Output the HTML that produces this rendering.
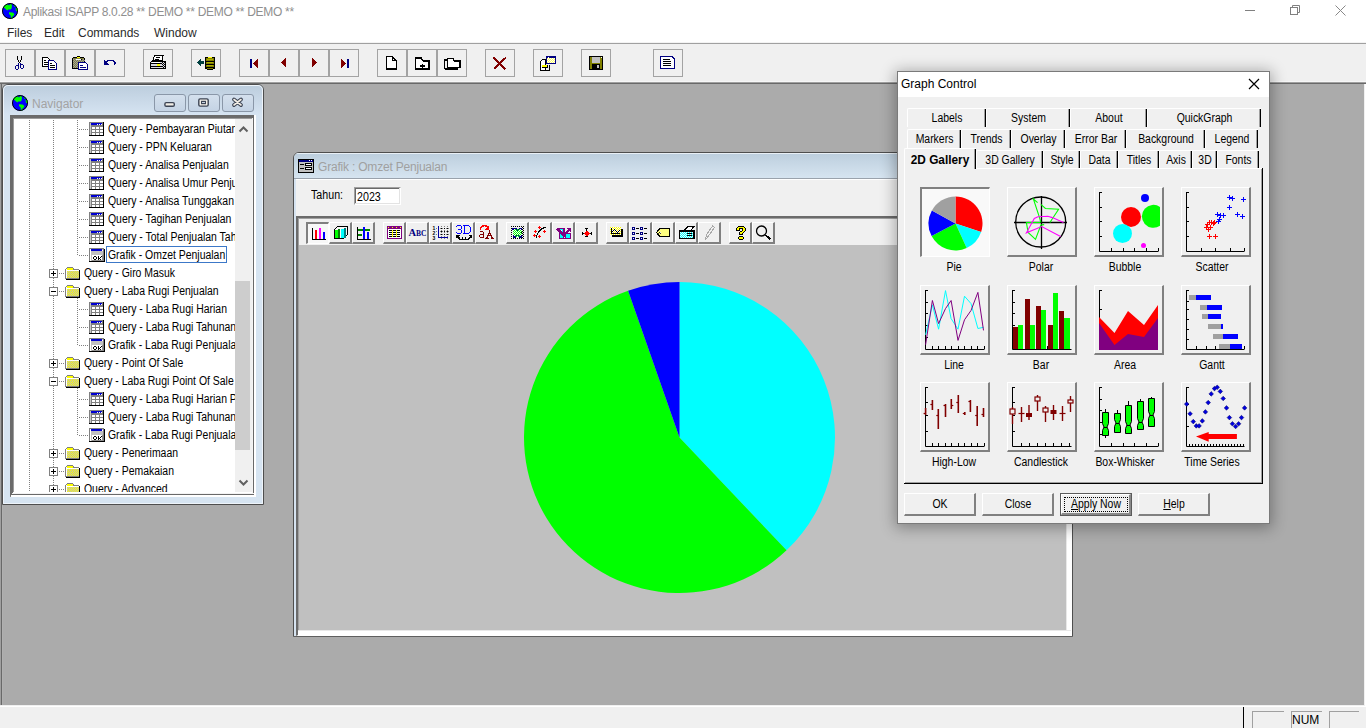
<!DOCTYPE html>
<html><head><meta charset="utf-8">
<style>
*{box-sizing:border-box;margin:0;padding:0}
html,body{width:1366px;height:728px;overflow:hidden;background:#fff;font-family:"Liberation Sans",sans-serif;position:relative}
.a{position:absolute}
.t{position:absolute;white-space:nowrap;font-family:"Liberation Sans",sans-serif;line-height:1}
svg{position:absolute;overflow:visible}
</style></head><body>
<div class="a" style="left:0px;top:0px;width:1366px;height:43px;background:#fff;"></div><div class="a" style="left:0px;top:42px;width:1366px;height:1px;background:#f3f3f3;"></div><div class="a" style="left:0px;top:43px;width:1366px;height:1px;background:#a0a0a0;"></div><div class="a" style="left:0px;top:44px;width:1366px;height:39px;background:#f0f0f0;"></div><div class="a" style="left:0px;top:81px;width:1366px;height:1px;background:#f7f7f7;"></div><div class="a" style="left:0px;top:82px;width:1366px;height:1px;background:#a0a0a0;"></div><div class="a" style="left:0px;top:83px;width:1366px;height:1px;background:#696969;"></div><svg style="left:2px;top:3px" width="16" height="16" viewBox="0 0 16 16">
<circle cx="8" cy="8" r="7.8" fill="#0000ff"/>
<path d="M2.3 2.2L6 1.2L6.5 2.3H7.5L8 1L10 1.4L9.6 5.4L8.6 6.6L6.2 6.6L5.2 7.6L3.5 6L1.5 4Z" fill="#00ff00"/>
<path d="M12.3 1.8L14.2 3L14.3 4.3L12.2 3.5Z M13.5 5L15.8 5.3L15.8 8.2L14 8Z" fill="#00ff00"/>
<path d="M7 9.3L10.6 9.5L12.5 11L11.8 12.5L10.6 13.2L10.2 15.8L9 15.5L8.6 12.5L7 11Z" fill="#00ff00"/>
<path d="M2.2 2.2L6 1.2L6.5 2.3H7.5L8 1L10 1.4L9.6 5.4L8.6 6.6L6.2 6.6L5.2 7.6L3.5 6L1.5 4Z" fill="#00ff00" opacity="0"/><circle cx="8" cy="8" r="7.5" fill="none" stroke="#000" stroke-width="1"/>
</svg><span class="t" style="left:23px;top:6px;font-size:12px;color:#8f8f8f;letter-spacing:-0.3px;">Aplikasi ISAPP 8.0.28 ** DEMO ** DEMO ** DEMO **</span><svg style="left:1240px;top:0px" width="126" height="22">
<line x1="5" y1="10.5" x2="15" y2="10.5" stroke="#808080" stroke-width="1"/>
<rect x="50.5" y="7.5" width="7" height="7" fill="none" stroke="#808080"/>
<path d="M52.5 7.5v-2h7v7h-2" fill="none" stroke="#808080"/>
<path d="M95.5 5.5l10 10M105.5 5.5l-10 10" stroke="#888" stroke-width="1"/>
</svg><span class="t" style="left:7px;top:27px;font-size:12px;color:#2b2b2b;">Files</span><span class="t" style="left:44px;top:27px;font-size:12px;color:#2b2b2b;">Edit</span><span class="t" style="left:78px;top:27px;font-size:12px;color:#2b2b2b;">Commands</span><span class="t" style="left:154px;top:27px;font-size:12px;color:#2b2b2b;">Window</span><div class="a" style="left:5px;top:49px;width:30px;height:28px;border:1px solid #a3a3a3;background:#f0f0f0"></div><div class="a" style="left:35px;top:49px;width:30px;height:28px;border:1px solid #a3a3a3;background:#f0f0f0"></div><div class="a" style="left:65px;top:49px;width:30px;height:28px;border:1px solid #a3a3a3;background:#f0f0f0"></div><div class="a" style="left:95px;top:49px;width:30px;height:28px;border:1px solid #a3a3a3;background:#f0f0f0"></div><div class="a" style="left:143px;top:49px;width:30px;height:28px;border:1px solid #a3a3a3;background:#f0f0f0"></div><div class="a" style="left:191px;top:49px;width:30px;height:28px;border:1px solid #a3a3a3;background:#f0f0f0"></div><div class="a" style="left:239px;top:49px;width:30px;height:28px;border:1px solid #a3a3a3;background:#f0f0f0"></div><div class="a" style="left:269px;top:49px;width:30px;height:28px;border:1px solid #a3a3a3;background:#f0f0f0"></div><div class="a" style="left:299px;top:49px;width:30px;height:28px;border:1px solid #a3a3a3;background:#f0f0f0"></div><div class="a" style="left:329px;top:49px;width:30px;height:28px;border:1px solid #a3a3a3;background:#f0f0f0"></div><div class="a" style="left:377px;top:49px;width:30px;height:28px;border:1px solid #a3a3a3;background:#f0f0f0"></div><div class="a" style="left:407px;top:49px;width:30px;height:28px;border:1px solid #a3a3a3;background:#f0f0f0"></div><div class="a" style="left:437px;top:49px;width:30px;height:28px;border:1px solid #a3a3a3;background:#f0f0f0"></div><div class="a" style="left:485px;top:49px;width:30px;height:28px;border:1px solid #a3a3a3;background:#f0f0f0"></div><div class="a" style="left:533px;top:49px;width:30px;height:28px;border:1px solid #a3a3a3;background:#f0f0f0"></div><div class="a" style="left:581px;top:49px;width:30px;height:28px;border:1px solid #a3a3a3;background:#f0f0f0"></div><div class="a" style="left:653px;top:49px;width:30px;height:28px;border:1px solid #a3a3a3;background:#f0f0f0"></div><svg style="left:0;top:0" width="1366" height="100" shape-rendering="crispEdges"><rect x="17" y="56" width="1" height="1" fill="#000"/><rect x="17" y="57" width="1" height="1" fill="#000"/><rect x="17" y="58" width="1" height="1" fill="#000"/><rect x="17" y="59" width="1" height="1" fill="#000"/><rect x="21" y="56" width="1" height="1" fill="#000"/><rect x="21" y="57" width="1" height="1" fill="#000"/><rect x="21" y="58" width="1" height="1" fill="#000"/><rect x="21" y="59" width="1" height="1" fill="#000"/><rect x="18" y="60" width="1" height="1" fill="#000"/><rect x="20" y="60" width="1" height="1" fill="#000"/><rect x="18" y="61" width="1" height="1" fill="#000"/><rect x="20" y="61" width="1" height="1" fill="#000"/><rect x="19" y="62" width="1" height="1" fill="#000"/><rect x="18" y="63" width="1" height="2" fill="#000080"/><rect x="20" y="63" width="1" height="1" fill="#000080"/><rect x="16" y="65" width="2" height="1" fill="#000080"/><rect x="15" y="66" width="1" height="3" fill="#000080"/><rect x="18" y="65" width="1" height="4" fill="#000080"/><rect x="16" y="69" width="2" height="1" fill="#000080"/><rect x="21" y="64" width="2" height="1" fill="#000080"/><rect x="20" y="64" width="1" height="4" fill="#000080"/><rect x="23" y="65" width="1" height="3" fill="#000080"/><rect x="21" y="68" width="2" height="1" fill="#000080"/><path d="M42.5 66.5v-9h5l2 2v7z" fill="#fff" stroke="#000"/><rect x="44" y="60" width="2" height="1" fill="#000"/><rect x="44" y="62" width="4" height="1" fill="#000"/><rect x="44" y="64" width="4" height="1" fill="#000"/><path d="M48.5 69.5v-9h5l3 3v6z" fill="#fff" stroke="#000080" stroke-width="1.2"/><rect x="50" y="63" width="2" height="1" fill="#000"/><rect x="50" y="65" width="5" height="1" fill="#000"/><rect x="50" y="67" width="5" height="1" fill="#000"/><path d="M72.5 68.5v-10l1-1h3l1-1h2l1 1h3l1 1v10z" fill="#808040" stroke="#000"/><rect x="73" y="59" width="1" height="1" fill="#a0a0a0"/><rect x="75" y="59" width="1" height="1" fill="#a0a0a0"/><rect x="77" y="59" width="1" height="1" fill="#a0a0a0"/><rect x="79" y="59" width="1" height="1" fill="#a0a0a0"/><rect x="81" y="59" width="1" height="1" fill="#a0a0a0"/><rect x="83" y="59" width="1" height="1" fill="#a0a0a0"/><rect x="74" y="60" width="1" height="1" fill="#a0a0a0"/><rect x="76" y="60" width="1" height="1" fill="#a0a0a0"/><rect x="78" y="60" width="1" height="1" fill="#a0a0a0"/><rect x="80" y="60" width="1" height="1" fill="#a0a0a0"/><rect x="82" y="60" width="1" height="1" fill="#a0a0a0"/><rect x="84" y="60" width="1" height="1" fill="#a0a0a0"/><rect x="73" y="61" width="1" height="1" fill="#a0a0a0"/><rect x="75" y="61" width="1" height="1" fill="#a0a0a0"/><rect x="77" y="61" width="1" height="1" fill="#a0a0a0"/><rect x="79" y="61" width="1" height="1" fill="#a0a0a0"/><rect x="81" y="61" width="1" height="1" fill="#a0a0a0"/><rect x="83" y="61" width="1" height="1" fill="#a0a0a0"/><rect x="74" y="62" width="1" height="1" fill="#a0a0a0"/><rect x="76" y="62" width="1" height="1" fill="#a0a0a0"/><rect x="78" y="62" width="1" height="1" fill="#a0a0a0"/><rect x="80" y="62" width="1" height="1" fill="#a0a0a0"/><rect x="82" y="62" width="1" height="1" fill="#a0a0a0"/><rect x="84" y="62" width="1" height="1" fill="#a0a0a0"/><rect x="73" y="63" width="1" height="1" fill="#a0a0a0"/><rect x="75" y="63" width="1" height="1" fill="#a0a0a0"/><rect x="77" y="63" width="1" height="1" fill="#a0a0a0"/><rect x="79" y="63" width="1" height="1" fill="#a0a0a0"/><rect x="81" y="63" width="1" height="1" fill="#a0a0a0"/><rect x="83" y="63" width="1" height="1" fill="#a0a0a0"/><rect x="74" y="64" width="1" height="1" fill="#a0a0a0"/><rect x="76" y="64" width="1" height="1" fill="#a0a0a0"/><rect x="78" y="64" width="1" height="1" fill="#a0a0a0"/><rect x="80" y="64" width="1" height="1" fill="#a0a0a0"/><rect x="82" y="64" width="1" height="1" fill="#a0a0a0"/><rect x="84" y="64" width="1" height="1" fill="#a0a0a0"/><rect x="73" y="65" width="1" height="1" fill="#a0a0a0"/><rect x="75" y="65" width="1" height="1" fill="#a0a0a0"/><rect x="77" y="65" width="1" height="1" fill="#a0a0a0"/><rect x="79" y="65" width="1" height="1" fill="#a0a0a0"/><rect x="81" y="65" width="1" height="1" fill="#a0a0a0"/><rect x="83" y="65" width="1" height="1" fill="#a0a0a0"/><rect x="74" y="66" width="1" height="1" fill="#a0a0a0"/><rect x="76" y="66" width="1" height="1" fill="#a0a0a0"/><rect x="78" y="66" width="1" height="1" fill="#a0a0a0"/><rect x="80" y="66" width="1" height="1" fill="#a0a0a0"/><rect x="82" y="66" width="1" height="1" fill="#a0a0a0"/><rect x="84" y="66" width="1" height="1" fill="#a0a0a0"/><rect x="73" y="67" width="1" height="1" fill="#a0a0a0"/><rect x="75" y="67" width="1" height="1" fill="#a0a0a0"/><rect x="77" y="67" width="1" height="1" fill="#a0a0a0"/><rect x="79" y="67" width="1" height="1" fill="#a0a0a0"/><rect x="81" y="67" width="1" height="1" fill="#a0a0a0"/><rect x="83" y="67" width="1" height="1" fill="#a0a0a0"/><path d="M75.5 59.5h6" stroke="#000"/><path d="M76.5 58.5l1-1.5h2l1 1.5" fill="none" stroke="#ffff00"/><path d="M76 59h5" stroke="#fff"/><path d="M78.5 69.5v-7h7l2 2v5z" fill="#fff" stroke="#000080" stroke-width="1.2"/><rect x="80" y="65" width="3" height="1" fill="#000080"/><rect x="80" y="67" width="6" height="1" fill="#000080"/><path d="M104 60v5h5z" fill="#000080"/><path d="M106.5 62l2-1.5h4.5l2 1.5v2l-1.5 1.5" fill="none" stroke="#000080" stroke-width="1.4"/><path d="M155 55.5h8.5l-1 1.5v3h-9.5l1.5-4z" fill="#fff" stroke="#000"/><rect x="156" y="57" width="4" height="1" fill="#000"/><rect x="155" y="59" width="4" height="1" fill="#000"/><path d="M150.5 68.5v-6l1-1h13l1 1v6z" fill="#d8d8e0" stroke="#000"/><rect x="151" y="63" width="11" height="1" fill="#000"/><rect x="151" y="66" width="11" height="1" fill="#000"/><rect x="157" y="64" width="3" height="2" fill="#ffff00"/><rect x="152" y="62" width="8" height="1" fill="#fff"/><rect x="163" y="61" width="1" height="1" fill="#000"/><rect x="165" y="61" width="1" height="1" fill="#000"/><rect x="162" y="62" width="1" height="1" fill="#000"/><rect x="164" y="62" width="1" height="1" fill="#000"/><rect x="163" y="63" width="1" height="1" fill="#000"/><rect x="165" y="63" width="1" height="1" fill="#000"/><rect x="162" y="64" width="1" height="1" fill="#000"/><rect x="164" y="64" width="1" height="1" fill="#000"/><rect x="163" y="65" width="1" height="1" fill="#000"/><rect x="165" y="65" width="1" height="1" fill="#000"/><rect x="162" y="66" width="1" height="1" fill="#000"/><rect x="164" y="66" width="1" height="1" fill="#000"/><rect x="163" y="67" width="1" height="1" fill="#000"/><rect x="165" y="67" width="1" height="1" fill="#000"/><rect x="162" y="68" width="1" height="1" fill="#000"/><rect x="164" y="68" width="1" height="1" fill="#000"/><path d="M197 62.5l3.5-3.5v2h3.5v3h-3.5v2z" fill="#004040"/><path d="M205.5 68.5v-10.5l1.5-1h6l1.5 1v10.5l-1.5 0.5h-6z" fill="#808000" stroke="#000"/><rect x="208" y="57" width="4" height="1" fill="#ffff00"/><rect x="206" y="61" width="8" height="1" fill="#000"/><rect x="206" y="64" width="8" height="1" fill="#000"/><rect x="206" y="67" width="8" height="1" fill="#000"/><rect x="207" y="59" width="6" height="1" fill="#b0b000"/><rect x="207" y="62" width="6" height="1" fill="#b0b000"/><rect x="207" y="65" width="6" height="1" fill="#b0b000"/><rect x="250" y="59" width="2" height="9" fill="#000080"/><path d="M253 63.5l5-5v10z" fill="#800000"/><path d="M281 62.5l5-4.5v9z" fill="#800000"/><path d="M312 58v9l5.2-4.5z" fill="#800000"/><rect x="347" y="59" width="2" height="9" fill="#000080"/><path d="M341 58.5v10l5-5z" fill="#800000"/><path d="M386.7 69.2v-12.5h5.5l4.2 4.2v8.3z" fill="#fff" stroke="#000" stroke-width="1.5"/><path d="M392.2 56.7v4.2h4.2" fill="none" stroke="#000" stroke-width="1"/><path d="M415.7 69.2v-11h5.5l2.5 3h5.5v8z" fill="#fff" stroke="#000" stroke-width="1.5"/><path d="M420 66h5M422.5 63.5v5" stroke="#000" stroke-width="1.3"/><path d="M444.7 69.2v-9h2.5" fill="none" stroke="#000" stroke-width="1.5"/><path d="M444.7 69.2h13" stroke="#000" stroke-width="1.5"/><path d="M447.7 67.5v-9h5l2 2.5h5.5v6.5z" fill="#fff" stroke="#000" stroke-width="1.5"/><path d="M493.5 57.5l12 12M506 57.5l-11.5 11" stroke="#800000" stroke-width="2"/><path d="M540.5 70.5v-9l2-2h3v11z" fill="#fff" stroke="#000"/><path d="M540.5 70.5h9v-6" fill="none" stroke="#000"/><rect x="542" y="65" width="5" height="2" fill="#ffff00"/><path d="M541.5 67.5h6v-3" fill="none" stroke="#000"/><rect x="546" y="56" width="10" height="8" fill="#000080"/><rect x="547" y="58" width="8" height="5" fill="#ffff60"/><rect x="548" y="57" width="1" height="1" fill="#fff"/><rect x="548" y="58" width="1" height="1" fill="#fff"/><rect x="550" y="58" width="1" height="1" fill="#fff"/><rect x="552" y="58" width="1" height="1" fill="#fff"/><rect x="554" y="58" width="1" height="1" fill="#fff"/><rect x="547" y="59" width="1" height="1" fill="#fff"/><rect x="549" y="59" width="1" height="1" fill="#fff"/><rect x="551" y="59" width="1" height="1" fill="#fff"/><rect x="553" y="59" width="1" height="1" fill="#fff"/><rect x="548" y="60" width="1" height="1" fill="#fff"/><rect x="550" y="60" width="1" height="1" fill="#fff"/><rect x="552" y="60" width="1" height="1" fill="#fff"/><rect x="554" y="60" width="1" height="1" fill="#fff"/><rect x="547" y="61" width="1" height="1" fill="#fff"/><rect x="549" y="61" width="1" height="1" fill="#fff"/><rect x="551" y="61" width="1" height="1" fill="#fff"/><rect x="553" y="61" width="1" height="1" fill="#fff"/><rect x="548" y="62" width="1" height="1" fill="#fff"/><rect x="550" y="62" width="1" height="1" fill="#fff"/><rect x="552" y="62" width="1" height="1" fill="#fff"/><rect x="554" y="62" width="1" height="1" fill="#fff"/><rect x="589" y="56" width="14" height="14" fill="#000"/><rect x="590" y="57" width="12" height="12" fill="#808000"/><rect x="592" y="57" width="8" height="6" fill="#c0c0c0"/><rect x="592" y="64" width="8" height="5" fill="#000"/><rect x="597" y="65" width="2" height="3" fill="#c0c0c0"/><rect x="601" y="57" width="1" height="1" fill="#fff"/><path d="M660.6 68.4v-12h11.5l2.2 2.2v9.8z" fill="#fff" stroke="#000080" stroke-width="1.4"/><rect x="663" y="59" width="7" height="1" fill="#000"/><rect x="663" y="61" width="8" height="1" fill="#000"/><rect x="663" y="63" width="8" height="1" fill="#000"/><rect x="663" y="65" width="8" height="1" fill="#000"/></svg><div class="a" style="left:0px;top:84px;width:1366px;height:621px;background:#ababab;"></div><div class="a" style="left:0px;top:84px;width:1px;height:621px;background:#a0a0a0;"></div><div class="a" style="left:1px;top:84px;width:1px;height:621px;background:#696969;"></div><div class="a" style="left:2px;top:84px;width:1px;height:621px;background:#b0b0b0;"></div><div class="a" style="left:1364px;top:84px;width:1px;height:622px;background:#f0f0f0;"></div><div class="a" style="left:1365px;top:84px;width:1px;height:622px;background:#fff;"></div><div class="a" style="left:0px;top:705px;width:1365px;height:1px;background:#f0f0f0;"></div><div class="a" style="left:0px;top:706px;width:1366px;height:1px;background:#fff;"></div><div class="a" style="left:0px;top:707px;width:1366px;height:21px;background:#f0f0f0;"></div><div class="a" style="left:1243px;top:707px;width:1px;height:21px;background:#000;"></div><div class="a" style="left:1252px;top:711px;width:32px;height:17px;border-top:1px solid #a0a0a0;border-left:1px solid #a0a0a0"></div><div class="a" style="left:1291px;top:711px;width:31px;height:17px;border-top:1px solid #a0a0a0;border-left:1px solid #a0a0a0"></div><div class="a" style="left:1329px;top:711px;width:30px;height:17px;border-top:1px solid #a0a0a0;border-left:1px solid #a0a0a0"></div><span class="t" style="left:1292px;top:714px;font-size:12px;color:#000;">NUM</span><div class="a" style="left:2px;top:84px;width:262px;height:421px;background:#d6e4f1;border:1px solid #4e4e4e;border-radius:6px 6px 0 0;overflow:hidden"><div class="a" style="left:0;top:0;width:260px;height:30px;background:linear-gradient(#bccddd,#d6e4f2)"></div><div class="a" style="left:0;top:0;width:260px;height:419px;border:1px solid #eef4fa;border-radius:5px 5px 0 0"></div></div><svg style="left:12px;top:95px" width="16" height="16" viewBox="0 0 16 16">
<circle cx="8" cy="8" r="7.8" fill="#0000ff"/>
<path d="M2.3 2.2L6 1.2L6.5 2.3H7.5L8 1L10 1.4L9.6 5.4L8.6 6.6L6.2 6.6L5.2 7.6L3.5 6L1.5 4Z" fill="#00ff00"/>
<path d="M12.3 1.8L14.2 3L14.3 4.3L12.2 3.5Z M13.5 5L15.8 5.3L15.8 8.2L14 8Z" fill="#00ff00"/>
<path d="M7 9.3L10.6 9.5L12.5 11L11.8 12.5L10.6 13.2L10.2 15.8L9 15.5L8.6 12.5L7 11Z" fill="#00ff00"/>
<path d="M2.2 2.2L6 1.2L6.5 2.3H7.5L8 1L10 1.4L9.6 5.4L8.6 6.6L6.2 6.6L5.2 7.6L3.5 6L1.5 4Z" fill="#00ff00" opacity="0"/><circle cx="8" cy="8" r="7.5" fill="none" stroke="#000" stroke-width="1"/>
</svg><span class="t" style="left:32px;top:98px;font-size:12px;color:#a3a3a3;">Navigator</span><div class="a" style="left:154px;top:94px;width:32px;height:18px;border:1px solid #8a97a8;border-radius:3px;background:linear-gradient(#d4e0ed,#c4d3e4)"></div><div class="a" style="left:188px;top:94px;width:32px;height:18px;border:1px solid #8a97a8;border-radius:3px;background:linear-gradient(#d4e0ed,#c4d3e4)"></div><div class="a" style="left:222px;top:94px;width:32px;height:18px;border:1px solid #8a97a8;border-radius:3px;background:linear-gradient(#d4e0ed,#c4d3e4)"></div><svg style="left:154px;top:94px" width="100" height="18">
<rect x="10.9" y="8.6" width="9.4" height="3.6" rx="1.3" fill="#f2eee6" stroke="#3c4454" stroke-width="1.4"/>
<rect x="44.8" y="4.9" width="9.4" height="7.2" rx="1.3" fill="#f2eee6" stroke="#3c4454" stroke-width="1.4"/>
<rect x="47.6" y="7.4" width="3.8" height="2.2" fill="#c8d4e2" stroke="#3c4454" stroke-width="1.2"/>
<path d="M80 5.5l7 5.5M87 5.5l-7 5.5" stroke="#3c4454" stroke-width="3.8" stroke-linecap="round"/><path d="M80 5.5l7 5.5M87 5.5l-7 5.5" stroke="#f2eee6" stroke-width="1.6" stroke-linecap="round"/>
</svg><div class="a" style="left:10px;top:115px;width:246px;height:382px;background:#fff;border-top:3px solid #6b6b6b;border-left:3px solid #6b6b6b;border-right:1px solid #fff;border-bottom:1px solid #fff"></div><div class="a" style="left:13px;top:118px;width:240px;height:1px;background:#9c9c9c;"></div><div class="a" style="left:13px;top:118px;width:1px;height:374px;background:#9c9c9c;"></div><div class="a" style="left:252px;top:118px;width:1px;height:375px;background:#f4f4f4;"></div><div class="a" style="left:253px;top:116px;width:1px;height:379px;background:#696969;"></div><div class="a" style="left:12px;top:493px;width:242px;height:1px;background:#f4f4f4;"></div><div class="a" style="left:12px;top:494px;width:242px;height:1px;background:#696969;"></div><div class="a" style="left:254px;top:115px;width:2px;height:382px;background:#fff;"></div><div class="a" style="left:11px;top:495px;width:245px;height:2px;background:#fff;"></div><div class="a" style="left:14px;top:119px;width:238px;height:373px;background:#fff;"></div><div class="a" style="left:235px;top:119px;width:17px;height:373px;background:#f0f0f0;"></div><div class="a" style="left:235px;top:281px;width:15px;height:169px;background:#cdcdcd;"></div><svg style="left:235px;top:119px" width="17" height="373">
<path d="M4.5 12.5l4-4 4 4" fill="none" stroke="#606060" stroke-width="2"/>
<path d="M4.5 361.5l4 4 4-4" fill="none" stroke="#606060" stroke-width="2"/>
</svg><div class="a" style="left:14px;top:119px;width:221px;height:373px;overflow:hidden"><svg style="left:-14px;top:-119px" width="300" height="520" shape-rendering="crispEdges"><rect x="29" y="120" width="1" height="1" fill="#808080"/><rect x="29" y="122" width="1" height="1" fill="#808080"/><rect x="29" y="124" width="1" height="1" fill="#808080"/><rect x="29" y="126" width="1" height="1" fill="#808080"/><rect x="29" y="128" width="1" height="1" fill="#808080"/><rect x="29" y="130" width="1" height="1" fill="#808080"/><rect x="29" y="132" width="1" height="1" fill="#808080"/><rect x="29" y="134" width="1" height="1" fill="#808080"/><rect x="29" y="136" width="1" height="1" fill="#808080"/><rect x="29" y="138" width="1" height="1" fill="#808080"/><rect x="29" y="140" width="1" height="1" fill="#808080"/><rect x="29" y="142" width="1" height="1" fill="#808080"/><rect x="29" y="144" width="1" height="1" fill="#808080"/><rect x="29" y="146" width="1" height="1" fill="#808080"/><rect x="29" y="148" width="1" height="1" fill="#808080"/><rect x="29" y="150" width="1" height="1" fill="#808080"/><rect x="29" y="152" width="1" height="1" fill="#808080"/><rect x="29" y="154" width="1" height="1" fill="#808080"/><rect x="29" y="156" width="1" height="1" fill="#808080"/><rect x="29" y="158" width="1" height="1" fill="#808080"/><rect x="29" y="160" width="1" height="1" fill="#808080"/><rect x="29" y="162" width="1" height="1" fill="#808080"/><rect x="29" y="164" width="1" height="1" fill="#808080"/><rect x="29" y="166" width="1" height="1" fill="#808080"/><rect x="29" y="168" width="1" height="1" fill="#808080"/><rect x="29" y="170" width="1" height="1" fill="#808080"/><rect x="29" y="172" width="1" height="1" fill="#808080"/><rect x="29" y="174" width="1" height="1" fill="#808080"/><rect x="29" y="176" width="1" height="1" fill="#808080"/><rect x="29" y="178" width="1" height="1" fill="#808080"/><rect x="29" y="180" width="1" height="1" fill="#808080"/><rect x="29" y="182" width="1" height="1" fill="#808080"/><rect x="29" y="184" width="1" height="1" fill="#808080"/><rect x="29" y="186" width="1" height="1" fill="#808080"/><rect x="29" y="188" width="1" height="1" fill="#808080"/><rect x="29" y="190" width="1" height="1" fill="#808080"/><rect x="29" y="192" width="1" height="1" fill="#808080"/><rect x="29" y="194" width="1" height="1" fill="#808080"/><rect x="29" y="196" width="1" height="1" fill="#808080"/><rect x="29" y="198" width="1" height="1" fill="#808080"/><rect x="29" y="200" width="1" height="1" fill="#808080"/><rect x="29" y="202" width="1" height="1" fill="#808080"/><rect x="29" y="204" width="1" height="1" fill="#808080"/><rect x="29" y="206" width="1" height="1" fill="#808080"/><rect x="29" y="208" width="1" height="1" fill="#808080"/><rect x="29" y="210" width="1" height="1" fill="#808080"/><rect x="29" y="212" width="1" height="1" fill="#808080"/><rect x="29" y="214" width="1" height="1" fill="#808080"/><rect x="29" y="216" width="1" height="1" fill="#808080"/><rect x="29" y="218" width="1" height="1" fill="#808080"/><rect x="29" y="220" width="1" height="1" fill="#808080"/><rect x="29" y="222" width="1" height="1" fill="#808080"/><rect x="29" y="224" width="1" height="1" fill="#808080"/><rect x="29" y="226" width="1" height="1" fill="#808080"/><rect x="29" y="228" width="1" height="1" fill="#808080"/><rect x="29" y="230" width="1" height="1" fill="#808080"/><rect x="29" y="232" width="1" height="1" fill="#808080"/><rect x="29" y="234" width="1" height="1" fill="#808080"/><rect x="29" y="236" width="1" height="1" fill="#808080"/><rect x="29" y="238" width="1" height="1" fill="#808080"/><rect x="29" y="240" width="1" height="1" fill="#808080"/><rect x="29" y="242" width="1" height="1" fill="#808080"/><rect x="29" y="244" width="1" height="1" fill="#808080"/><rect x="29" y="246" width="1" height="1" fill="#808080"/><rect x="29" y="248" width="1" height="1" fill="#808080"/><rect x="29" y="250" width="1" height="1" fill="#808080"/><rect x="29" y="252" width="1" height="1" fill="#808080"/><rect x="29" y="254" width="1" height="1" fill="#808080"/><rect x="29" y="256" width="1" height="1" fill="#808080"/><rect x="29" y="258" width="1" height="1" fill="#808080"/><rect x="29" y="260" width="1" height="1" fill="#808080"/><rect x="29" y="262" width="1" height="1" fill="#808080"/><rect x="29" y="264" width="1" height="1" fill="#808080"/><rect x="29" y="266" width="1" height="1" fill="#808080"/><rect x="29" y="268" width="1" height="1" fill="#808080"/><rect x="29" y="270" width="1" height="1" fill="#808080"/><rect x="29" y="272" width="1" height="1" fill="#808080"/><rect x="29" y="274" width="1" height="1" fill="#808080"/><rect x="29" y="276" width="1" height="1" fill="#808080"/><rect x="29" y="278" width="1" height="1" fill="#808080"/><rect x="29" y="280" width="1" height="1" fill="#808080"/><rect x="29" y="282" width="1" height="1" fill="#808080"/><rect x="29" y="284" width="1" height="1" fill="#808080"/><rect x="29" y="286" width="1" height="1" fill="#808080"/><rect x="29" y="288" width="1" height="1" fill="#808080"/><rect x="29" y="290" width="1" height="1" fill="#808080"/><rect x="29" y="292" width="1" height="1" fill="#808080"/><rect x="29" y="294" width="1" height="1" fill="#808080"/><rect x="29" y="296" width="1" height="1" fill="#808080"/><rect x="29" y="298" width="1" height="1" fill="#808080"/><rect x="29" y="300" width="1" height="1" fill="#808080"/><rect x="29" y="302" width="1" height="1" fill="#808080"/><rect x="29" y="304" width="1" height="1" fill="#808080"/><rect x="29" y="306" width="1" height="1" fill="#808080"/><rect x="29" y="308" width="1" height="1" fill="#808080"/><rect x="29" y="310" width="1" height="1" fill="#808080"/><rect x="29" y="312" width="1" height="1" fill="#808080"/><rect x="29" y="314" width="1" height="1" fill="#808080"/><rect x="29" y="316" width="1" height="1" fill="#808080"/><rect x="29" y="318" width="1" height="1" fill="#808080"/><rect x="29" y="320" width="1" height="1" fill="#808080"/><rect x="29" y="322" width="1" height="1" fill="#808080"/><rect x="29" y="324" width="1" height="1" fill="#808080"/><rect x="29" y="326" width="1" height="1" fill="#808080"/><rect x="29" y="328" width="1" height="1" fill="#808080"/><rect x="29" y="330" width="1" height="1" fill="#808080"/><rect x="29" y="332" width="1" height="1" fill="#808080"/><rect x="29" y="334" width="1" height="1" fill="#808080"/><rect x="29" y="336" width="1" height="1" fill="#808080"/><rect x="29" y="338" width="1" height="1" fill="#808080"/><rect x="29" y="340" width="1" height="1" fill="#808080"/><rect x="29" y="342" width="1" height="1" fill="#808080"/><rect x="29" y="344" width="1" height="1" fill="#808080"/><rect x="29" y="346" width="1" height="1" fill="#808080"/><rect x="29" y="348" width="1" height="1" fill="#808080"/><rect x="29" y="350" width="1" height="1" fill="#808080"/><rect x="29" y="352" width="1" height="1" fill="#808080"/><rect x="29" y="354" width="1" height="1" fill="#808080"/><rect x="29" y="356" width="1" height="1" fill="#808080"/><rect x="29" y="358" width="1" height="1" fill="#808080"/><rect x="29" y="360" width="1" height="1" fill="#808080"/><rect x="29" y="362" width="1" height="1" fill="#808080"/><rect x="29" y="364" width="1" height="1" fill="#808080"/><rect x="29" y="366" width="1" height="1" fill="#808080"/><rect x="29" y="368" width="1" height="1" fill="#808080"/><rect x="29" y="370" width="1" height="1" fill="#808080"/><rect x="29" y="372" width="1" height="1" fill="#808080"/><rect x="29" y="374" width="1" height="1" fill="#808080"/><rect x="29" y="376" width="1" height="1" fill="#808080"/><rect x="29" y="378" width="1" height="1" fill="#808080"/><rect x="29" y="380" width="1" height="1" fill="#808080"/><rect x="29" y="382" width="1" height="1" fill="#808080"/><rect x="29" y="384" width="1" height="1" fill="#808080"/><rect x="29" y="386" width="1" height="1" fill="#808080"/><rect x="29" y="388" width="1" height="1" fill="#808080"/><rect x="29" y="390" width="1" height="1" fill="#808080"/><rect x="29" y="392" width="1" height="1" fill="#808080"/><rect x="29" y="394" width="1" height="1" fill="#808080"/><rect x="29" y="396" width="1" height="1" fill="#808080"/><rect x="29" y="398" width="1" height="1" fill="#808080"/><rect x="29" y="400" width="1" height="1" fill="#808080"/><rect x="29" y="402" width="1" height="1" fill="#808080"/><rect x="29" y="404" width="1" height="1" fill="#808080"/><rect x="29" y="406" width="1" height="1" fill="#808080"/><rect x="29" y="408" width="1" height="1" fill="#808080"/><rect x="29" y="410" width="1" height="1" fill="#808080"/><rect x="29" y="412" width="1" height="1" fill="#808080"/><rect x="29" y="414" width="1" height="1" fill="#808080"/><rect x="29" y="416" width="1" height="1" fill="#808080"/><rect x="29" y="418" width="1" height="1" fill="#808080"/><rect x="29" y="420" width="1" height="1" fill="#808080"/><rect x="29" y="422" width="1" height="1" fill="#808080"/><rect x="29" y="424" width="1" height="1" fill="#808080"/><rect x="29" y="426" width="1" height="1" fill="#808080"/><rect x="29" y="428" width="1" height="1" fill="#808080"/><rect x="29" y="430" width="1" height="1" fill="#808080"/><rect x="29" y="432" width="1" height="1" fill="#808080"/><rect x="29" y="434" width="1" height="1" fill="#808080"/><rect x="29" y="436" width="1" height="1" fill="#808080"/><rect x="29" y="438" width="1" height="1" fill="#808080"/><rect x="29" y="440" width="1" height="1" fill="#808080"/><rect x="29" y="442" width="1" height="1" fill="#808080"/><rect x="29" y="444" width="1" height="1" fill="#808080"/><rect x="29" y="446" width="1" height="1" fill="#808080"/><rect x="29" y="448" width="1" height="1" fill="#808080"/><rect x="29" y="450" width="1" height="1" fill="#808080"/><rect x="29" y="452" width="1" height="1" fill="#808080"/><rect x="29" y="454" width="1" height="1" fill="#808080"/><rect x="29" y="456" width="1" height="1" fill="#808080"/><rect x="29" y="458" width="1" height="1" fill="#808080"/><rect x="29" y="460" width="1" height="1" fill="#808080"/><rect x="29" y="462" width="1" height="1" fill="#808080"/><rect x="29" y="464" width="1" height="1" fill="#808080"/><rect x="29" y="466" width="1" height="1" fill="#808080"/><rect x="29" y="468" width="1" height="1" fill="#808080"/><rect x="29" y="470" width="1" height="1" fill="#808080"/><rect x="29" y="472" width="1" height="1" fill="#808080"/><rect x="29" y="474" width="1" height="1" fill="#808080"/><rect x="29" y="476" width="1" height="1" fill="#808080"/><rect x="29" y="478" width="1" height="1" fill="#808080"/><rect x="29" y="480" width="1" height="1" fill="#808080"/><rect x="29" y="482" width="1" height="1" fill="#808080"/><rect x="29" y="484" width="1" height="1" fill="#808080"/><rect x="29" y="486" width="1" height="1" fill="#808080"/><rect x="29" y="488" width="1" height="1" fill="#808080"/><rect x="29" y="490" width="1" height="1" fill="#808080"/><rect x="53" y="120" width="1" height="1" fill="#808080"/><rect x="53" y="122" width="1" height="1" fill="#808080"/><rect x="53" y="124" width="1" height="1" fill="#808080"/><rect x="53" y="126" width="1" height="1" fill="#808080"/><rect x="53" y="128" width="1" height="1" fill="#808080"/><rect x="53" y="130" width="1" height="1" fill="#808080"/><rect x="53" y="132" width="1" height="1" fill="#808080"/><rect x="53" y="134" width="1" height="1" fill="#808080"/><rect x="53" y="136" width="1" height="1" fill="#808080"/><rect x="53" y="138" width="1" height="1" fill="#808080"/><rect x="53" y="140" width="1" height="1" fill="#808080"/><rect x="53" y="142" width="1" height="1" fill="#808080"/><rect x="53" y="144" width="1" height="1" fill="#808080"/><rect x="53" y="146" width="1" height="1" fill="#808080"/><rect x="53" y="148" width="1" height="1" fill="#808080"/><rect x="53" y="150" width="1" height="1" fill="#808080"/><rect x="53" y="152" width="1" height="1" fill="#808080"/><rect x="53" y="154" width="1" height="1" fill="#808080"/><rect x="53" y="156" width="1" height="1" fill="#808080"/><rect x="53" y="158" width="1" height="1" fill="#808080"/><rect x="53" y="160" width="1" height="1" fill="#808080"/><rect x="53" y="162" width="1" height="1" fill="#808080"/><rect x="53" y="164" width="1" height="1" fill="#808080"/><rect x="53" y="166" width="1" height="1" fill="#808080"/><rect x="53" y="168" width="1" height="1" fill="#808080"/><rect x="53" y="170" width="1" height="1" fill="#808080"/><rect x="53" y="172" width="1" height="1" fill="#808080"/><rect x="53" y="174" width="1" height="1" fill="#808080"/><rect x="53" y="176" width="1" height="1" fill="#808080"/><rect x="53" y="178" width="1" height="1" fill="#808080"/><rect x="53" y="180" width="1" height="1" fill="#808080"/><rect x="53" y="182" width="1" height="1" fill="#808080"/><rect x="53" y="184" width="1" height="1" fill="#808080"/><rect x="53" y="186" width="1" height="1" fill="#808080"/><rect x="53" y="188" width="1" height="1" fill="#808080"/><rect x="53" y="190" width="1" height="1" fill="#808080"/><rect x="53" y="192" width="1" height="1" fill="#808080"/><rect x="53" y="194" width="1" height="1" fill="#808080"/><rect x="53" y="196" width="1" height="1" fill="#808080"/><rect x="53" y="198" width="1" height="1" fill="#808080"/><rect x="53" y="200" width="1" height="1" fill="#808080"/><rect x="53" y="202" width="1" height="1" fill="#808080"/><rect x="53" y="204" width="1" height="1" fill="#808080"/><rect x="53" y="206" width="1" height="1" fill="#808080"/><rect x="53" y="208" width="1" height="1" fill="#808080"/><rect x="53" y="210" width="1" height="1" fill="#808080"/><rect x="53" y="212" width="1" height="1" fill="#808080"/><rect x="53" y="214" width="1" height="1" fill="#808080"/><rect x="53" y="216" width="1" height="1" fill="#808080"/><rect x="53" y="218" width="1" height="1" fill="#808080"/><rect x="53" y="220" width="1" height="1" fill="#808080"/><rect x="53" y="222" width="1" height="1" fill="#808080"/><rect x="53" y="224" width="1" height="1" fill="#808080"/><rect x="53" y="226" width="1" height="1" fill="#808080"/><rect x="53" y="228" width="1" height="1" fill="#808080"/><rect x="53" y="230" width="1" height="1" fill="#808080"/><rect x="53" y="232" width="1" height="1" fill="#808080"/><rect x="53" y="234" width="1" height="1" fill="#808080"/><rect x="53" y="236" width="1" height="1" fill="#808080"/><rect x="53" y="238" width="1" height="1" fill="#808080"/><rect x="53" y="240" width="1" height="1" fill="#808080"/><rect x="53" y="242" width="1" height="1" fill="#808080"/><rect x="53" y="244" width="1" height="1" fill="#808080"/><rect x="53" y="246" width="1" height="1" fill="#808080"/><rect x="53" y="248" width="1" height="1" fill="#808080"/><rect x="53" y="250" width="1" height="1" fill="#808080"/><rect x="53" y="252" width="1" height="1" fill="#808080"/><rect x="53" y="254" width="1" height="1" fill="#808080"/><rect x="53" y="256" width="1" height="1" fill="#808080"/><rect x="53" y="258" width="1" height="1" fill="#808080"/><rect x="53" y="260" width="1" height="1" fill="#808080"/><rect x="53" y="262" width="1" height="1" fill="#808080"/><rect x="53" y="264" width="1" height="1" fill="#808080"/><rect x="53" y="266" width="1" height="1" fill="#808080"/><rect x="53" y="268" width="1" height="1" fill="#808080"/><rect x="53" y="270" width="1" height="1" fill="#808080"/><rect x="53" y="272" width="1" height="1" fill="#808080"/><rect x="53" y="274" width="1" height="1" fill="#808080"/><rect x="53" y="276" width="1" height="1" fill="#808080"/><rect x="53" y="278" width="1" height="1" fill="#808080"/><rect x="53" y="280" width="1" height="1" fill="#808080"/><rect x="53" y="282" width="1" height="1" fill="#808080"/><rect x="53" y="284" width="1" height="1" fill="#808080"/><rect x="53" y="286" width="1" height="1" fill="#808080"/><rect x="53" y="288" width="1" height="1" fill="#808080"/><rect x="53" y="290" width="1" height="1" fill="#808080"/><rect x="53" y="292" width="1" height="1" fill="#808080"/><rect x="53" y="294" width="1" height="1" fill="#808080"/><rect x="53" y="296" width="1" height="1" fill="#808080"/><rect x="53" y="298" width="1" height="1" fill="#808080"/><rect x="53" y="300" width="1" height="1" fill="#808080"/><rect x="53" y="302" width="1" height="1" fill="#808080"/><rect x="53" y="304" width="1" height="1" fill="#808080"/><rect x="53" y="306" width="1" height="1" fill="#808080"/><rect x="53" y="308" width="1" height="1" fill="#808080"/><rect x="53" y="310" width="1" height="1" fill="#808080"/><rect x="53" y="312" width="1" height="1" fill="#808080"/><rect x="53" y="314" width="1" height="1" fill="#808080"/><rect x="53" y="316" width="1" height="1" fill="#808080"/><rect x="53" y="318" width="1" height="1" fill="#808080"/><rect x="53" y="320" width="1" height="1" fill="#808080"/><rect x="53" y="322" width="1" height="1" fill="#808080"/><rect x="53" y="324" width="1" height="1" fill="#808080"/><rect x="53" y="326" width="1" height="1" fill="#808080"/><rect x="53" y="328" width="1" height="1" fill="#808080"/><rect x="53" y="330" width="1" height="1" fill="#808080"/><rect x="53" y="332" width="1" height="1" fill="#808080"/><rect x="53" y="334" width="1" height="1" fill="#808080"/><rect x="53" y="336" width="1" height="1" fill="#808080"/><rect x="53" y="338" width="1" height="1" fill="#808080"/><rect x="53" y="340" width="1" height="1" fill="#808080"/><rect x="53" y="342" width="1" height="1" fill="#808080"/><rect x="53" y="344" width="1" height="1" fill="#808080"/><rect x="53" y="346" width="1" height="1" fill="#808080"/><rect x="53" y="348" width="1" height="1" fill="#808080"/><rect x="53" y="350" width="1" height="1" fill="#808080"/><rect x="53" y="352" width="1" height="1" fill="#808080"/><rect x="53" y="354" width="1" height="1" fill="#808080"/><rect x="53" y="356" width="1" height="1" fill="#808080"/><rect x="53" y="358" width="1" height="1" fill="#808080"/><rect x="53" y="360" width="1" height="1" fill="#808080"/><rect x="53" y="362" width="1" height="1" fill="#808080"/><rect x="53" y="364" width="1" height="1" fill="#808080"/><rect x="53" y="366" width="1" height="1" fill="#808080"/><rect x="53" y="368" width="1" height="1" fill="#808080"/><rect x="53" y="370" width="1" height="1" fill="#808080"/><rect x="53" y="372" width="1" height="1" fill="#808080"/><rect x="53" y="374" width="1" height="1" fill="#808080"/><rect x="53" y="376" width="1" height="1" fill="#808080"/><rect x="53" y="378" width="1" height="1" fill="#808080"/><rect x="53" y="380" width="1" height="1" fill="#808080"/><rect x="53" y="382" width="1" height="1" fill="#808080"/><rect x="53" y="384" width="1" height="1" fill="#808080"/><rect x="53" y="386" width="1" height="1" fill="#808080"/><rect x="53" y="388" width="1" height="1" fill="#808080"/><rect x="53" y="390" width="1" height="1" fill="#808080"/><rect x="53" y="392" width="1" height="1" fill="#808080"/><rect x="53" y="394" width="1" height="1" fill="#808080"/><rect x="53" y="396" width="1" height="1" fill="#808080"/><rect x="53" y="398" width="1" height="1" fill="#808080"/><rect x="53" y="400" width="1" height="1" fill="#808080"/><rect x="53" y="402" width="1" height="1" fill="#808080"/><rect x="53" y="404" width="1" height="1" fill="#808080"/><rect x="53" y="406" width="1" height="1" fill="#808080"/><rect x="53" y="408" width="1" height="1" fill="#808080"/><rect x="53" y="410" width="1" height="1" fill="#808080"/><rect x="53" y="412" width="1" height="1" fill="#808080"/><rect x="53" y="414" width="1" height="1" fill="#808080"/><rect x="53" y="416" width="1" height="1" fill="#808080"/><rect x="53" y="418" width="1" height="1" fill="#808080"/><rect x="53" y="420" width="1" height="1" fill="#808080"/><rect x="53" y="422" width="1" height="1" fill="#808080"/><rect x="53" y="424" width="1" height="1" fill="#808080"/><rect x="53" y="426" width="1" height="1" fill="#808080"/><rect x="53" y="428" width="1" height="1" fill="#808080"/><rect x="53" y="430" width="1" height="1" fill="#808080"/><rect x="53" y="432" width="1" height="1" fill="#808080"/><rect x="53" y="434" width="1" height="1" fill="#808080"/><rect x="53" y="436" width="1" height="1" fill="#808080"/><rect x="53" y="438" width="1" height="1" fill="#808080"/><rect x="53" y="440" width="1" height="1" fill="#808080"/><rect x="53" y="442" width="1" height="1" fill="#808080"/><rect x="53" y="444" width="1" height="1" fill="#808080"/><rect x="53" y="446" width="1" height="1" fill="#808080"/><rect x="53" y="448" width="1" height="1" fill="#808080"/><rect x="53" y="450" width="1" height="1" fill="#808080"/><rect x="53" y="452" width="1" height="1" fill="#808080"/><rect x="53" y="454" width="1" height="1" fill="#808080"/><rect x="53" y="456" width="1" height="1" fill="#808080"/><rect x="53" y="458" width="1" height="1" fill="#808080"/><rect x="53" y="460" width="1" height="1" fill="#808080"/><rect x="53" y="462" width="1" height="1" fill="#808080"/><rect x="53" y="464" width="1" height="1" fill="#808080"/><rect x="53" y="466" width="1" height="1" fill="#808080"/><rect x="53" y="468" width="1" height="1" fill="#808080"/><rect x="53" y="470" width="1" height="1" fill="#808080"/><rect x="53" y="472" width="1" height="1" fill="#808080"/><rect x="53" y="474" width="1" height="1" fill="#808080"/><rect x="53" y="476" width="1" height="1" fill="#808080"/><rect x="53" y="478" width="1" height="1" fill="#808080"/><rect x="53" y="480" width="1" height="1" fill="#808080"/><rect x="53" y="482" width="1" height="1" fill="#808080"/><rect x="53" y="484" width="1" height="1" fill="#808080"/><rect x="53" y="486" width="1" height="1" fill="#808080"/><rect x="53" y="488" width="1" height="1" fill="#808080"/><rect x="53" y="490" width="1" height="1" fill="#808080"/><rect x="77" y="120" width="1" height="1" fill="#808080"/><rect x="77" y="122" width="1" height="1" fill="#808080"/><rect x="77" y="124" width="1" height="1" fill="#808080"/><rect x="77" y="126" width="1" height="1" fill="#808080"/><rect x="77" y="128" width="1" height="1" fill="#808080"/><rect x="77" y="130" width="1" height="1" fill="#808080"/><rect x="77" y="132" width="1" height="1" fill="#808080"/><rect x="77" y="134" width="1" height="1" fill="#808080"/><rect x="77" y="136" width="1" height="1" fill="#808080"/><rect x="77" y="138" width="1" height="1" fill="#808080"/><rect x="77" y="140" width="1" height="1" fill="#808080"/><rect x="77" y="142" width="1" height="1" fill="#808080"/><rect x="77" y="144" width="1" height="1" fill="#808080"/><rect x="77" y="146" width="1" height="1" fill="#808080"/><rect x="77" y="148" width="1" height="1" fill="#808080"/><rect x="77" y="150" width="1" height="1" fill="#808080"/><rect x="77" y="152" width="1" height="1" fill="#808080"/><rect x="77" y="154" width="1" height="1" fill="#808080"/><rect x="77" y="156" width="1" height="1" fill="#808080"/><rect x="77" y="158" width="1" height="1" fill="#808080"/><rect x="77" y="160" width="1" height="1" fill="#808080"/><rect x="77" y="162" width="1" height="1" fill="#808080"/><rect x="77" y="164" width="1" height="1" fill="#808080"/><rect x="77" y="166" width="1" height="1" fill="#808080"/><rect x="77" y="168" width="1" height="1" fill="#808080"/><rect x="77" y="170" width="1" height="1" fill="#808080"/><rect x="77" y="172" width="1" height="1" fill="#808080"/><rect x="77" y="174" width="1" height="1" fill="#808080"/><rect x="77" y="176" width="1" height="1" fill="#808080"/><rect x="77" y="178" width="1" height="1" fill="#808080"/><rect x="77" y="180" width="1" height="1" fill="#808080"/><rect x="77" y="182" width="1" height="1" fill="#808080"/><rect x="77" y="184" width="1" height="1" fill="#808080"/><rect x="77" y="186" width="1" height="1" fill="#808080"/><rect x="77" y="188" width="1" height="1" fill="#808080"/><rect x="77" y="190" width="1" height="1" fill="#808080"/><rect x="77" y="192" width="1" height="1" fill="#808080"/><rect x="77" y="194" width="1" height="1" fill="#808080"/><rect x="77" y="196" width="1" height="1" fill="#808080"/><rect x="77" y="198" width="1" height="1" fill="#808080"/><rect x="77" y="200" width="1" height="1" fill="#808080"/><rect x="77" y="202" width="1" height="1" fill="#808080"/><rect x="77" y="204" width="1" height="1" fill="#808080"/><rect x="77" y="206" width="1" height="1" fill="#808080"/><rect x="77" y="208" width="1" height="1" fill="#808080"/><rect x="77" y="210" width="1" height="1" fill="#808080"/><rect x="77" y="212" width="1" height="1" fill="#808080"/><rect x="77" y="214" width="1" height="1" fill="#808080"/><rect x="77" y="216" width="1" height="1" fill="#808080"/><rect x="77" y="218" width="1" height="1" fill="#808080"/><rect x="77" y="220" width="1" height="1" fill="#808080"/><rect x="77" y="222" width="1" height="1" fill="#808080"/><rect x="77" y="224" width="1" height="1" fill="#808080"/><rect x="77" y="226" width="1" height="1" fill="#808080"/><rect x="77" y="228" width="1" height="1" fill="#808080"/><rect x="77" y="230" width="1" height="1" fill="#808080"/><rect x="77" y="232" width="1" height="1" fill="#808080"/><rect x="77" y="234" width="1" height="1" fill="#808080"/><rect x="77" y="236" width="1" height="1" fill="#808080"/><rect x="77" y="238" width="1" height="1" fill="#808080"/><rect x="77" y="240" width="1" height="1" fill="#808080"/><rect x="77" y="242" width="1" height="1" fill="#808080"/><rect x="77" y="244" width="1" height="1" fill="#808080"/><rect x="77" y="246" width="1" height="1" fill="#808080"/><rect x="77" y="248" width="1" height="1" fill="#808080"/><rect x="77" y="250" width="1" height="1" fill="#808080"/><rect x="77" y="252" width="1" height="1" fill="#808080"/><rect x="77" y="254" width="1" height="1" fill="#808080"/><rect x="77" y="292" width="1" height="1" fill="#808080"/><rect x="77" y="294" width="1" height="1" fill="#808080"/><rect x="77" y="296" width="1" height="1" fill="#808080"/><rect x="77" y="298" width="1" height="1" fill="#808080"/><rect x="77" y="300" width="1" height="1" fill="#808080"/><rect x="77" y="302" width="1" height="1" fill="#808080"/><rect x="77" y="304" width="1" height="1" fill="#808080"/><rect x="77" y="306" width="1" height="1" fill="#808080"/><rect x="77" y="308" width="1" height="1" fill="#808080"/><rect x="77" y="310" width="1" height="1" fill="#808080"/><rect x="77" y="312" width="1" height="1" fill="#808080"/><rect x="77" y="314" width="1" height="1" fill="#808080"/><rect x="77" y="316" width="1" height="1" fill="#808080"/><rect x="77" y="318" width="1" height="1" fill="#808080"/><rect x="77" y="320" width="1" height="1" fill="#808080"/><rect x="77" y="322" width="1" height="1" fill="#808080"/><rect x="77" y="324" width="1" height="1" fill="#808080"/><rect x="77" y="326" width="1" height="1" fill="#808080"/><rect x="77" y="328" width="1" height="1" fill="#808080"/><rect x="77" y="330" width="1" height="1" fill="#808080"/><rect x="77" y="332" width="1" height="1" fill="#808080"/><rect x="77" y="334" width="1" height="1" fill="#808080"/><rect x="77" y="336" width="1" height="1" fill="#808080"/><rect x="77" y="338" width="1" height="1" fill="#808080"/><rect x="77" y="340" width="1" height="1" fill="#808080"/><rect x="77" y="342" width="1" height="1" fill="#808080"/><rect x="77" y="344" width="1" height="1" fill="#808080"/><rect x="77" y="382" width="1" height="1" fill="#808080"/><rect x="77" y="384" width="1" height="1" fill="#808080"/><rect x="77" y="386" width="1" height="1" fill="#808080"/><rect x="77" y="388" width="1" height="1" fill="#808080"/><rect x="77" y="390" width="1" height="1" fill="#808080"/><rect x="77" y="392" width="1" height="1" fill="#808080"/><rect x="77" y="394" width="1" height="1" fill="#808080"/><rect x="77" y="396" width="1" height="1" fill="#808080"/><rect x="77" y="398" width="1" height="1" fill="#808080"/><rect x="77" y="400" width="1" height="1" fill="#808080"/><rect x="77" y="402" width="1" height="1" fill="#808080"/><rect x="77" y="404" width="1" height="1" fill="#808080"/><rect x="77" y="406" width="1" height="1" fill="#808080"/><rect x="77" y="408" width="1" height="1" fill="#808080"/><rect x="77" y="410" width="1" height="1" fill="#808080"/><rect x="77" y="412" width="1" height="1" fill="#808080"/><rect x="77" y="414" width="1" height="1" fill="#808080"/><rect x="77" y="416" width="1" height="1" fill="#808080"/><rect x="77" y="418" width="1" height="1" fill="#808080"/><rect x="77" y="420" width="1" height="1" fill="#808080"/><rect x="77" y="422" width="1" height="1" fill="#808080"/><rect x="77" y="424" width="1" height="1" fill="#808080"/><rect x="77" y="426" width="1" height="1" fill="#808080"/><rect x="77" y="428" width="1" height="1" fill="#808080"/><rect x="77" y="430" width="1" height="1" fill="#808080"/><rect x="77" y="432" width="1" height="1" fill="#808080"/><rect x="77" y="434" width="1" height="1" fill="#808080"/><rect x="79" y="129" width="1" height="1" fill="#808080"/><rect x="81" y="129" width="1" height="1" fill="#808080"/><rect x="83" y="129" width="1" height="1" fill="#808080"/><rect x="85" y="129" width="1" height="1" fill="#808080"/><rect x="87" y="129" width="1" height="1" fill="#808080"/><rect x="89" y="122" width="14" height="13" fill="#808080"/><rect x="90" y="123" width="1" height="12" fill="#c8c8c8"/><rect x="91" y="123" width="11" height="2" fill="#0000d0"/><rect x="97" y="124" width="1" height="1" fill="#fff"/><rect x="99" y="124" width="1" height="1" fill="#fff"/><rect x="101" y="124" width="1" height="1" fill="#fff"/><rect x="92" y="127" width="3" height="2" fill="#fff"/><rect x="92" y="130" width="3" height="2" fill="#fff"/><rect x="92" y="133" width="3" height="2" fill="#fff"/><rect x="96" y="127" width="3" height="2" fill="#fff"/><rect x="96" y="130" width="3" height="2" fill="#fff"/><rect x="96" y="133" width="3" height="2" fill="#fff"/><rect x="100" y="127" width="3" height="2" fill="#fff"/><rect x="100" y="130" width="3" height="2" fill="#fff"/><rect x="100" y="133" width="3" height="2" fill="#fff"/><rect x="103" y="122" width="1" height="14" fill="#000"/><rect x="89" y="135" width="15" height="1" fill="#000"/><rect x="79" y="147" width="1" height="1" fill="#808080"/><rect x="81" y="147" width="1" height="1" fill="#808080"/><rect x="83" y="147" width="1" height="1" fill="#808080"/><rect x="85" y="147" width="1" height="1" fill="#808080"/><rect x="87" y="147" width="1" height="1" fill="#808080"/><rect x="89" y="140" width="14" height="13" fill="#808080"/><rect x="90" y="141" width="1" height="12" fill="#c8c8c8"/><rect x="91" y="141" width="11" height="2" fill="#0000d0"/><rect x="97" y="142" width="1" height="1" fill="#fff"/><rect x="99" y="142" width="1" height="1" fill="#fff"/><rect x="101" y="142" width="1" height="1" fill="#fff"/><rect x="92" y="145" width="3" height="2" fill="#fff"/><rect x="92" y="148" width="3" height="2" fill="#fff"/><rect x="92" y="151" width="3" height="2" fill="#fff"/><rect x="96" y="145" width="3" height="2" fill="#fff"/><rect x="96" y="148" width="3" height="2" fill="#fff"/><rect x="96" y="151" width="3" height="2" fill="#fff"/><rect x="100" y="145" width="3" height="2" fill="#fff"/><rect x="100" y="148" width="3" height="2" fill="#fff"/><rect x="100" y="151" width="3" height="2" fill="#fff"/><rect x="103" y="140" width="1" height="14" fill="#000"/><rect x="89" y="153" width="15" height="1" fill="#000"/><rect x="79" y="165" width="1" height="1" fill="#808080"/><rect x="81" y="165" width="1" height="1" fill="#808080"/><rect x="83" y="165" width="1" height="1" fill="#808080"/><rect x="85" y="165" width="1" height="1" fill="#808080"/><rect x="87" y="165" width="1" height="1" fill="#808080"/><rect x="89" y="158" width="14" height="13" fill="#808080"/><rect x="90" y="159" width="1" height="12" fill="#c8c8c8"/><rect x="91" y="159" width="11" height="2" fill="#0000d0"/><rect x="97" y="160" width="1" height="1" fill="#fff"/><rect x="99" y="160" width="1" height="1" fill="#fff"/><rect x="101" y="160" width="1" height="1" fill="#fff"/><rect x="92" y="163" width="3" height="2" fill="#fff"/><rect x="92" y="166" width="3" height="2" fill="#fff"/><rect x="92" y="169" width="3" height="2" fill="#fff"/><rect x="96" y="163" width="3" height="2" fill="#fff"/><rect x="96" y="166" width="3" height="2" fill="#fff"/><rect x="96" y="169" width="3" height="2" fill="#fff"/><rect x="100" y="163" width="3" height="2" fill="#fff"/><rect x="100" y="166" width="3" height="2" fill="#fff"/><rect x="100" y="169" width="3" height="2" fill="#fff"/><rect x="103" y="158" width="1" height="14" fill="#000"/><rect x="89" y="171" width="15" height="1" fill="#000"/><rect x="79" y="183" width="1" height="1" fill="#808080"/><rect x="81" y="183" width="1" height="1" fill="#808080"/><rect x="83" y="183" width="1" height="1" fill="#808080"/><rect x="85" y="183" width="1" height="1" fill="#808080"/><rect x="87" y="183" width="1" height="1" fill="#808080"/><rect x="89" y="176" width="14" height="13" fill="#808080"/><rect x="90" y="177" width="1" height="12" fill="#c8c8c8"/><rect x="91" y="177" width="11" height="2" fill="#0000d0"/><rect x="97" y="178" width="1" height="1" fill="#fff"/><rect x="99" y="178" width="1" height="1" fill="#fff"/><rect x="101" y="178" width="1" height="1" fill="#fff"/><rect x="92" y="181" width="3" height="2" fill="#fff"/><rect x="92" y="184" width="3" height="2" fill="#fff"/><rect x="92" y="187" width="3" height="2" fill="#fff"/><rect x="96" y="181" width="3" height="2" fill="#fff"/><rect x="96" y="184" width="3" height="2" fill="#fff"/><rect x="96" y="187" width="3" height="2" fill="#fff"/><rect x="100" y="181" width="3" height="2" fill="#fff"/><rect x="100" y="184" width="3" height="2" fill="#fff"/><rect x="100" y="187" width="3" height="2" fill="#fff"/><rect x="103" y="176" width="1" height="14" fill="#000"/><rect x="89" y="189" width="15" height="1" fill="#000"/><rect x="79" y="201" width="1" height="1" fill="#808080"/><rect x="81" y="201" width="1" height="1" fill="#808080"/><rect x="83" y="201" width="1" height="1" fill="#808080"/><rect x="85" y="201" width="1" height="1" fill="#808080"/><rect x="87" y="201" width="1" height="1" fill="#808080"/><rect x="89" y="194" width="14" height="13" fill="#808080"/><rect x="90" y="195" width="1" height="12" fill="#c8c8c8"/><rect x="91" y="195" width="11" height="2" fill="#0000d0"/><rect x="97" y="196" width="1" height="1" fill="#fff"/><rect x="99" y="196" width="1" height="1" fill="#fff"/><rect x="101" y="196" width="1" height="1" fill="#fff"/><rect x="92" y="199" width="3" height="2" fill="#fff"/><rect x="92" y="202" width="3" height="2" fill="#fff"/><rect x="92" y="205" width="3" height="2" fill="#fff"/><rect x="96" y="199" width="3" height="2" fill="#fff"/><rect x="96" y="202" width="3" height="2" fill="#fff"/><rect x="96" y="205" width="3" height="2" fill="#fff"/><rect x="100" y="199" width="3" height="2" fill="#fff"/><rect x="100" y="202" width="3" height="2" fill="#fff"/><rect x="100" y="205" width="3" height="2" fill="#fff"/><rect x="103" y="194" width="1" height="14" fill="#000"/><rect x="89" y="207" width="15" height="1" fill="#000"/><rect x="79" y="219" width="1" height="1" fill="#808080"/><rect x="81" y="219" width="1" height="1" fill="#808080"/><rect x="83" y="219" width="1" height="1" fill="#808080"/><rect x="85" y="219" width="1" height="1" fill="#808080"/><rect x="87" y="219" width="1" height="1" fill="#808080"/><rect x="89" y="212" width="14" height="13" fill="#808080"/><rect x="90" y="213" width="1" height="12" fill="#c8c8c8"/><rect x="91" y="213" width="11" height="2" fill="#0000d0"/><rect x="97" y="214" width="1" height="1" fill="#fff"/><rect x="99" y="214" width="1" height="1" fill="#fff"/><rect x="101" y="214" width="1" height="1" fill="#fff"/><rect x="92" y="217" width="3" height="2" fill="#fff"/><rect x="92" y="220" width="3" height="2" fill="#fff"/><rect x="92" y="223" width="3" height="2" fill="#fff"/><rect x="96" y="217" width="3" height="2" fill="#fff"/><rect x="96" y="220" width="3" height="2" fill="#fff"/><rect x="96" y="223" width="3" height="2" fill="#fff"/><rect x="100" y="217" width="3" height="2" fill="#fff"/><rect x="100" y="220" width="3" height="2" fill="#fff"/><rect x="100" y="223" width="3" height="2" fill="#fff"/><rect x="103" y="212" width="1" height="14" fill="#000"/><rect x="89" y="225" width="15" height="1" fill="#000"/><rect x="79" y="237" width="1" height="1" fill="#808080"/><rect x="81" y="237" width="1" height="1" fill="#808080"/><rect x="83" y="237" width="1" height="1" fill="#808080"/><rect x="85" y="237" width="1" height="1" fill="#808080"/><rect x="87" y="237" width="1" height="1" fill="#808080"/><rect x="89" y="230" width="14" height="13" fill="#808080"/><rect x="90" y="231" width="1" height="12" fill="#c8c8c8"/><rect x="91" y="231" width="11" height="2" fill="#0000d0"/><rect x="97" y="232" width="1" height="1" fill="#fff"/><rect x="99" y="232" width="1" height="1" fill="#fff"/><rect x="101" y="232" width="1" height="1" fill="#fff"/><rect x="92" y="235" width="3" height="2" fill="#fff"/><rect x="92" y="238" width="3" height="2" fill="#fff"/><rect x="92" y="241" width="3" height="2" fill="#fff"/><rect x="96" y="235" width="3" height="2" fill="#fff"/><rect x="96" y="238" width="3" height="2" fill="#fff"/><rect x="96" y="241" width="3" height="2" fill="#fff"/><rect x="100" y="235" width="3" height="2" fill="#fff"/><rect x="100" y="238" width="3" height="2" fill="#fff"/><rect x="100" y="241" width="3" height="2" fill="#fff"/><rect x="103" y="230" width="1" height="14" fill="#000"/><rect x="89" y="243" width="15" height="1" fill="#000"/><rect x="79" y="255" width="1" height="1" fill="#808080"/><rect x="81" y="255" width="1" height="1" fill="#808080"/><rect x="83" y="255" width="1" height="1" fill="#808080"/><rect x="85" y="255" width="1" height="1" fill="#808080"/><rect x="87" y="255" width="1" height="1" fill="#808080"/><rect x="89" y="248" width="15" height="13" fill="#808080"/><rect x="90" y="249" width="13" height="12" fill="#c0c0c0"/><rect x="90" y="249" width="1" height="12" fill="#fff"/><rect x="91" y="249" width="11" height="2" fill="#0000d0"/><rect x="102" y="250" width="1" height="1" fill="#fff"/><rect x="92" y="255" width="10" height="6" fill="#fff"/><rect x="92" y="260" width="11" height="1" fill="#909090"/><rect x="102" y="255" width="1" height="6" fill="#909090"/><rect x="104" y="249" width="1" height="13" fill="#000"/><rect x="89" y="261" width="16" height="1" fill="#000"/><rect x="94" y="256" width="2" height="1" fill="#000"/><rect x="93" y="257" width="1" height="2" fill="#000"/><rect x="96" y="257" width="1" height="2" fill="#000"/><rect x="94" y="259" width="2" height="1" fill="#000"/><rect x="98" y="256" width="1" height="4" fill="#000"/><rect x="99" y="258" width="1" height="1" fill="#000"/><rect x="100" y="257" width="1" height="1" fill="#000"/><rect x="101" y="256" width="1" height="1" fill="#000"/><rect x="100" y="259" width="1" height="1" fill="#000"/><rect x="101" y="260" width="1" height="0" fill="#000"/><rect x="49.5" y="269.5" width="8" height="8" fill="#fff" stroke="#808080"/><rect x="51" y="273" width="5" height="1" fill="#000"/><rect x="53" y="271" width="1" height="5" fill="#000"/><rect x="59" y="273" width="1" height="1" fill="#808080"/><rect x="61" y="273" width="1" height="1" fill="#808080"/><rect x="63" y="273" width="1" height="1" fill="#808080"/><rect x="67" y="267" width="6" height="1" fill="#808080"/><rect x="66" y="268" width="1" height="1" fill="#808080"/><rect x="73" y="268" width="1" height="1" fill="#808080"/><rect x="73" y="269" width="6" height="1" fill="#808080"/><rect x="65" y="269" width="1" height="10" fill="#808080"/><rect x="66" y="268" width="1" height="1" fill="#808080"/><rect x="67" y="268" width="6" height="2" fill="#ffff00"/><rect x="66" y="270" width="13" height="8" fill="#ffff00"/><rect x="66" y="270" width="13" height="1" fill="#fff"/><rect x="66" y="270" width="1" height="8" fill="#fff"/><rect x="68" y="271" width="1" height="1" fill="#b8b8c8"/><rect x="70" y="271" width="1" height="1" fill="#b8b8c8"/><rect x="72" y="271" width="1" height="1" fill="#b8b8c8"/><rect x="74" y="271" width="1" height="1" fill="#b8b8c8"/><rect x="76" y="271" width="1" height="1" fill="#b8b8c8"/><rect x="78" y="271" width="1" height="1" fill="#b8b8c8"/><rect x="67" y="272" width="1" height="1" fill="#b8b8c8"/><rect x="69" y="272" width="1" height="1" fill="#b8b8c8"/><rect x="71" y="272" width="1" height="1" fill="#b8b8c8"/><rect x="73" y="272" width="1" height="1" fill="#b8b8c8"/><rect x="75" y="272" width="1" height="1" fill="#b8b8c8"/><rect x="77" y="272" width="1" height="1" fill="#b8b8c8"/><rect x="68" y="273" width="1" height="1" fill="#b8b8c8"/><rect x="70" y="273" width="1" height="1" fill="#b8b8c8"/><rect x="72" y="273" width="1" height="1" fill="#b8b8c8"/><rect x="74" y="273" width="1" height="1" fill="#b8b8c8"/><rect x="76" y="273" width="1" height="1" fill="#b8b8c8"/><rect x="78" y="273" width="1" height="1" fill="#b8b8c8"/><rect x="67" y="274" width="1" height="1" fill="#b8b8c8"/><rect x="69" y="274" width="1" height="1" fill="#b8b8c8"/><rect x="71" y="274" width="1" height="1" fill="#b8b8c8"/><rect x="73" y="274" width="1" height="1" fill="#b8b8c8"/><rect x="75" y="274" width="1" height="1" fill="#b8b8c8"/><rect x="77" y="274" width="1" height="1" fill="#b8b8c8"/><rect x="68" y="275" width="1" height="1" fill="#b8b8c8"/><rect x="70" y="275" width="1" height="1" fill="#b8b8c8"/><rect x="72" y="275" width="1" height="1" fill="#b8b8c8"/><rect x="74" y="275" width="1" height="1" fill="#b8b8c8"/><rect x="76" y="275" width="1" height="1" fill="#b8b8c8"/><rect x="78" y="275" width="1" height="1" fill="#b8b8c8"/><rect x="67" y="276" width="1" height="1" fill="#b8b8c8"/><rect x="69" y="276" width="1" height="1" fill="#b8b8c8"/><rect x="71" y="276" width="1" height="1" fill="#b8b8c8"/><rect x="73" y="276" width="1" height="1" fill="#b8b8c8"/><rect x="75" y="276" width="1" height="1" fill="#b8b8c8"/><rect x="77" y="276" width="1" height="1" fill="#b8b8c8"/><rect x="68" y="277" width="1" height="1" fill="#b8b8c8"/><rect x="70" y="277" width="1" height="1" fill="#b8b8c8"/><rect x="72" y="277" width="1" height="1" fill="#b8b8c8"/><rect x="74" y="277" width="1" height="1" fill="#b8b8c8"/><rect x="76" y="277" width="1" height="1" fill="#b8b8c8"/><rect x="78" y="277" width="1" height="1" fill="#b8b8c8"/><rect x="66" y="278" width="13" height="1" fill="#808080"/><rect x="79" y="270" width="1" height="10" fill="#000"/><rect x="66" y="279" width="14" height="1" fill="#000"/><rect x="49.5" y="287.5" width="8" height="8" fill="#fff" stroke="#808080"/><rect x="51" y="291" width="5" height="1" fill="#000"/><rect x="59" y="291" width="1" height="1" fill="#808080"/><rect x="61" y="291" width="1" height="1" fill="#808080"/><rect x="63" y="291" width="1" height="1" fill="#808080"/><rect x="67" y="285" width="6" height="1" fill="#808080"/><rect x="66" y="286" width="1" height="1" fill="#808080"/><rect x="73" y="286" width="1" height="1" fill="#808080"/><rect x="73" y="287" width="6" height="1" fill="#808080"/><rect x="65" y="287" width="1" height="10" fill="#808080"/><rect x="66" y="286" width="1" height="1" fill="#808080"/><rect x="67" y="286" width="6" height="2" fill="#ffff00"/><rect x="66" y="288" width="13" height="8" fill="#ffff00"/><rect x="66" y="288" width="13" height="1" fill="#fff"/><rect x="66" y="288" width="1" height="8" fill="#fff"/><rect x="68" y="289" width="1" height="1" fill="#b8b8c8"/><rect x="70" y="289" width="1" height="1" fill="#b8b8c8"/><rect x="72" y="289" width="1" height="1" fill="#b8b8c8"/><rect x="74" y="289" width="1" height="1" fill="#b8b8c8"/><rect x="76" y="289" width="1" height="1" fill="#b8b8c8"/><rect x="78" y="289" width="1" height="1" fill="#b8b8c8"/><rect x="67" y="290" width="1" height="1" fill="#b8b8c8"/><rect x="69" y="290" width="1" height="1" fill="#b8b8c8"/><rect x="71" y="290" width="1" height="1" fill="#b8b8c8"/><rect x="73" y="290" width="1" height="1" fill="#b8b8c8"/><rect x="75" y="290" width="1" height="1" fill="#b8b8c8"/><rect x="77" y="290" width="1" height="1" fill="#b8b8c8"/><rect x="68" y="291" width="1" height="1" fill="#b8b8c8"/><rect x="70" y="291" width="1" height="1" fill="#b8b8c8"/><rect x="72" y="291" width="1" height="1" fill="#b8b8c8"/><rect x="74" y="291" width="1" height="1" fill="#b8b8c8"/><rect x="76" y="291" width="1" height="1" fill="#b8b8c8"/><rect x="78" y="291" width="1" height="1" fill="#b8b8c8"/><rect x="67" y="292" width="1" height="1" fill="#b8b8c8"/><rect x="69" y="292" width="1" height="1" fill="#b8b8c8"/><rect x="71" y="292" width="1" height="1" fill="#b8b8c8"/><rect x="73" y="292" width="1" height="1" fill="#b8b8c8"/><rect x="75" y="292" width="1" height="1" fill="#b8b8c8"/><rect x="77" y="292" width="1" height="1" fill="#b8b8c8"/><rect x="68" y="293" width="1" height="1" fill="#b8b8c8"/><rect x="70" y="293" width="1" height="1" fill="#b8b8c8"/><rect x="72" y="293" width="1" height="1" fill="#b8b8c8"/><rect x="74" y="293" width="1" height="1" fill="#b8b8c8"/><rect x="76" y="293" width="1" height="1" fill="#b8b8c8"/><rect x="78" y="293" width="1" height="1" fill="#b8b8c8"/><rect x="67" y="294" width="1" height="1" fill="#b8b8c8"/><rect x="69" y="294" width="1" height="1" fill="#b8b8c8"/><rect x="71" y="294" width="1" height="1" fill="#b8b8c8"/><rect x="73" y="294" width="1" height="1" fill="#b8b8c8"/><rect x="75" y="294" width="1" height="1" fill="#b8b8c8"/><rect x="77" y="294" width="1" height="1" fill="#b8b8c8"/><rect x="68" y="295" width="1" height="1" fill="#b8b8c8"/><rect x="70" y="295" width="1" height="1" fill="#b8b8c8"/><rect x="72" y="295" width="1" height="1" fill="#b8b8c8"/><rect x="74" y="295" width="1" height="1" fill="#b8b8c8"/><rect x="76" y="295" width="1" height="1" fill="#b8b8c8"/><rect x="78" y="295" width="1" height="1" fill="#b8b8c8"/><rect x="66" y="296" width="13" height="1" fill="#808080"/><rect x="79" y="288" width="1" height="10" fill="#000"/><rect x="66" y="297" width="14" height="1" fill="#000"/><rect x="79" y="309" width="1" height="1" fill="#808080"/><rect x="81" y="309" width="1" height="1" fill="#808080"/><rect x="83" y="309" width="1" height="1" fill="#808080"/><rect x="85" y="309" width="1" height="1" fill="#808080"/><rect x="87" y="309" width="1" height="1" fill="#808080"/><rect x="89" y="302" width="14" height="13" fill="#808080"/><rect x="90" y="303" width="1" height="12" fill="#c8c8c8"/><rect x="91" y="303" width="11" height="2" fill="#0000d0"/><rect x="97" y="304" width="1" height="1" fill="#fff"/><rect x="99" y="304" width="1" height="1" fill="#fff"/><rect x="101" y="304" width="1" height="1" fill="#fff"/><rect x="92" y="307" width="3" height="2" fill="#fff"/><rect x="92" y="310" width="3" height="2" fill="#fff"/><rect x="92" y="313" width="3" height="2" fill="#fff"/><rect x="96" y="307" width="3" height="2" fill="#fff"/><rect x="96" y="310" width="3" height="2" fill="#fff"/><rect x="96" y="313" width="3" height="2" fill="#fff"/><rect x="100" y="307" width="3" height="2" fill="#fff"/><rect x="100" y="310" width="3" height="2" fill="#fff"/><rect x="100" y="313" width="3" height="2" fill="#fff"/><rect x="103" y="302" width="1" height="14" fill="#000"/><rect x="89" y="315" width="15" height="1" fill="#000"/><rect x="79" y="327" width="1" height="1" fill="#808080"/><rect x="81" y="327" width="1" height="1" fill="#808080"/><rect x="83" y="327" width="1" height="1" fill="#808080"/><rect x="85" y="327" width="1" height="1" fill="#808080"/><rect x="87" y="327" width="1" height="1" fill="#808080"/><rect x="89" y="320" width="14" height="13" fill="#808080"/><rect x="90" y="321" width="1" height="12" fill="#c8c8c8"/><rect x="91" y="321" width="11" height="2" fill="#0000d0"/><rect x="97" y="322" width="1" height="1" fill="#fff"/><rect x="99" y="322" width="1" height="1" fill="#fff"/><rect x="101" y="322" width="1" height="1" fill="#fff"/><rect x="92" y="325" width="3" height="2" fill="#fff"/><rect x="92" y="328" width="3" height="2" fill="#fff"/><rect x="92" y="331" width="3" height="2" fill="#fff"/><rect x="96" y="325" width="3" height="2" fill="#fff"/><rect x="96" y="328" width="3" height="2" fill="#fff"/><rect x="96" y="331" width="3" height="2" fill="#fff"/><rect x="100" y="325" width="3" height="2" fill="#fff"/><rect x="100" y="328" width="3" height="2" fill="#fff"/><rect x="100" y="331" width="3" height="2" fill="#fff"/><rect x="103" y="320" width="1" height="14" fill="#000"/><rect x="89" y="333" width="15" height="1" fill="#000"/><rect x="79" y="345" width="1" height="1" fill="#808080"/><rect x="81" y="345" width="1" height="1" fill="#808080"/><rect x="83" y="345" width="1" height="1" fill="#808080"/><rect x="85" y="345" width="1" height="1" fill="#808080"/><rect x="87" y="345" width="1" height="1" fill="#808080"/><rect x="89" y="338" width="15" height="13" fill="#808080"/><rect x="90" y="339" width="13" height="12" fill="#c0c0c0"/><rect x="90" y="339" width="1" height="12" fill="#fff"/><rect x="91" y="339" width="11" height="2" fill="#0000d0"/><rect x="102" y="340" width="1" height="1" fill="#fff"/><rect x="92" y="345" width="10" height="6" fill="#fff"/><rect x="92" y="350" width="11" height="1" fill="#909090"/><rect x="102" y="345" width="1" height="6" fill="#909090"/><rect x="104" y="339" width="1" height="13" fill="#000"/><rect x="89" y="351" width="16" height="1" fill="#000"/><rect x="94" y="346" width="2" height="1" fill="#000"/><rect x="93" y="347" width="1" height="2" fill="#000"/><rect x="96" y="347" width="1" height="2" fill="#000"/><rect x="94" y="349" width="2" height="1" fill="#000"/><rect x="98" y="346" width="1" height="4" fill="#000"/><rect x="99" y="348" width="1" height="1" fill="#000"/><rect x="100" y="347" width="1" height="1" fill="#000"/><rect x="101" y="346" width="1" height="1" fill="#000"/><rect x="100" y="349" width="1" height="1" fill="#000"/><rect x="101" y="350" width="1" height="0" fill="#000"/><rect x="49.5" y="359.5" width="8" height="8" fill="#fff" stroke="#808080"/><rect x="51" y="363" width="5" height="1" fill="#000"/><rect x="53" y="361" width="1" height="5" fill="#000"/><rect x="59" y="363" width="1" height="1" fill="#808080"/><rect x="61" y="363" width="1" height="1" fill="#808080"/><rect x="63" y="363" width="1" height="1" fill="#808080"/><rect x="67" y="357" width="6" height="1" fill="#808080"/><rect x="66" y="358" width="1" height="1" fill="#808080"/><rect x="73" y="358" width="1" height="1" fill="#808080"/><rect x="73" y="359" width="6" height="1" fill="#808080"/><rect x="65" y="359" width="1" height="10" fill="#808080"/><rect x="66" y="358" width="1" height="1" fill="#808080"/><rect x="67" y="358" width="6" height="2" fill="#ffff00"/><rect x="66" y="360" width="13" height="8" fill="#ffff00"/><rect x="66" y="360" width="13" height="1" fill="#fff"/><rect x="66" y="360" width="1" height="8" fill="#fff"/><rect x="68" y="361" width="1" height="1" fill="#b8b8c8"/><rect x="70" y="361" width="1" height="1" fill="#b8b8c8"/><rect x="72" y="361" width="1" height="1" fill="#b8b8c8"/><rect x="74" y="361" width="1" height="1" fill="#b8b8c8"/><rect x="76" y="361" width="1" height="1" fill="#b8b8c8"/><rect x="78" y="361" width="1" height="1" fill="#b8b8c8"/><rect x="67" y="362" width="1" height="1" fill="#b8b8c8"/><rect x="69" y="362" width="1" height="1" fill="#b8b8c8"/><rect x="71" y="362" width="1" height="1" fill="#b8b8c8"/><rect x="73" y="362" width="1" height="1" fill="#b8b8c8"/><rect x="75" y="362" width="1" height="1" fill="#b8b8c8"/><rect x="77" y="362" width="1" height="1" fill="#b8b8c8"/><rect x="68" y="363" width="1" height="1" fill="#b8b8c8"/><rect x="70" y="363" width="1" height="1" fill="#b8b8c8"/><rect x="72" y="363" width="1" height="1" fill="#b8b8c8"/><rect x="74" y="363" width="1" height="1" fill="#b8b8c8"/><rect x="76" y="363" width="1" height="1" fill="#b8b8c8"/><rect x="78" y="363" width="1" height="1" fill="#b8b8c8"/><rect x="67" y="364" width="1" height="1" fill="#b8b8c8"/><rect x="69" y="364" width="1" height="1" fill="#b8b8c8"/><rect x="71" y="364" width="1" height="1" fill="#b8b8c8"/><rect x="73" y="364" width="1" height="1" fill="#b8b8c8"/><rect x="75" y="364" width="1" height="1" fill="#b8b8c8"/><rect x="77" y="364" width="1" height="1" fill="#b8b8c8"/><rect x="68" y="365" width="1" height="1" fill="#b8b8c8"/><rect x="70" y="365" width="1" height="1" fill="#b8b8c8"/><rect x="72" y="365" width="1" height="1" fill="#b8b8c8"/><rect x="74" y="365" width="1" height="1" fill="#b8b8c8"/><rect x="76" y="365" width="1" height="1" fill="#b8b8c8"/><rect x="78" y="365" width="1" height="1" fill="#b8b8c8"/><rect x="67" y="366" width="1" height="1" fill="#b8b8c8"/><rect x="69" y="366" width="1" height="1" fill="#b8b8c8"/><rect x="71" y="366" width="1" height="1" fill="#b8b8c8"/><rect x="73" y="366" width="1" height="1" fill="#b8b8c8"/><rect x="75" y="366" width="1" height="1" fill="#b8b8c8"/><rect x="77" y="366" width="1" height="1" fill="#b8b8c8"/><rect x="68" y="367" width="1" height="1" fill="#b8b8c8"/><rect x="70" y="367" width="1" height="1" fill="#b8b8c8"/><rect x="72" y="367" width="1" height="1" fill="#b8b8c8"/><rect x="74" y="367" width="1" height="1" fill="#b8b8c8"/><rect x="76" y="367" width="1" height="1" fill="#b8b8c8"/><rect x="78" y="367" width="1" height="1" fill="#b8b8c8"/><rect x="66" y="368" width="13" height="1" fill="#808080"/><rect x="79" y="360" width="1" height="10" fill="#000"/><rect x="66" y="369" width="14" height="1" fill="#000"/><rect x="49.5" y="377.5" width="8" height="8" fill="#fff" stroke="#808080"/><rect x="51" y="381" width="5" height="1" fill="#000"/><rect x="59" y="381" width="1" height="1" fill="#808080"/><rect x="61" y="381" width="1" height="1" fill="#808080"/><rect x="63" y="381" width="1" height="1" fill="#808080"/><rect x="67" y="375" width="6" height="1" fill="#808080"/><rect x="66" y="376" width="1" height="1" fill="#808080"/><rect x="73" y="376" width="1" height="1" fill="#808080"/><rect x="73" y="377" width="6" height="1" fill="#808080"/><rect x="65" y="377" width="1" height="10" fill="#808080"/><rect x="66" y="376" width="1" height="1" fill="#808080"/><rect x="67" y="376" width="6" height="2" fill="#ffff00"/><rect x="66" y="378" width="13" height="8" fill="#ffff00"/><rect x="66" y="378" width="13" height="1" fill="#fff"/><rect x="66" y="378" width="1" height="8" fill="#fff"/><rect x="68" y="379" width="1" height="1" fill="#b8b8c8"/><rect x="70" y="379" width="1" height="1" fill="#b8b8c8"/><rect x="72" y="379" width="1" height="1" fill="#b8b8c8"/><rect x="74" y="379" width="1" height="1" fill="#b8b8c8"/><rect x="76" y="379" width="1" height="1" fill="#b8b8c8"/><rect x="78" y="379" width="1" height="1" fill="#b8b8c8"/><rect x="67" y="380" width="1" height="1" fill="#b8b8c8"/><rect x="69" y="380" width="1" height="1" fill="#b8b8c8"/><rect x="71" y="380" width="1" height="1" fill="#b8b8c8"/><rect x="73" y="380" width="1" height="1" fill="#b8b8c8"/><rect x="75" y="380" width="1" height="1" fill="#b8b8c8"/><rect x="77" y="380" width="1" height="1" fill="#b8b8c8"/><rect x="68" y="381" width="1" height="1" fill="#b8b8c8"/><rect x="70" y="381" width="1" height="1" fill="#b8b8c8"/><rect x="72" y="381" width="1" height="1" fill="#b8b8c8"/><rect x="74" y="381" width="1" height="1" fill="#b8b8c8"/><rect x="76" y="381" width="1" height="1" fill="#b8b8c8"/><rect x="78" y="381" width="1" height="1" fill="#b8b8c8"/><rect x="67" y="382" width="1" height="1" fill="#b8b8c8"/><rect x="69" y="382" width="1" height="1" fill="#b8b8c8"/><rect x="71" y="382" width="1" height="1" fill="#b8b8c8"/><rect x="73" y="382" width="1" height="1" fill="#b8b8c8"/><rect x="75" y="382" width="1" height="1" fill="#b8b8c8"/><rect x="77" y="382" width="1" height="1" fill="#b8b8c8"/><rect x="68" y="383" width="1" height="1" fill="#b8b8c8"/><rect x="70" y="383" width="1" height="1" fill="#b8b8c8"/><rect x="72" y="383" width="1" height="1" fill="#b8b8c8"/><rect x="74" y="383" width="1" height="1" fill="#b8b8c8"/><rect x="76" y="383" width="1" height="1" fill="#b8b8c8"/><rect x="78" y="383" width="1" height="1" fill="#b8b8c8"/><rect x="67" y="384" width="1" height="1" fill="#b8b8c8"/><rect x="69" y="384" width="1" height="1" fill="#b8b8c8"/><rect x="71" y="384" width="1" height="1" fill="#b8b8c8"/><rect x="73" y="384" width="1" height="1" fill="#b8b8c8"/><rect x="75" y="384" width="1" height="1" fill="#b8b8c8"/><rect x="77" y="384" width="1" height="1" fill="#b8b8c8"/><rect x="68" y="385" width="1" height="1" fill="#b8b8c8"/><rect x="70" y="385" width="1" height="1" fill="#b8b8c8"/><rect x="72" y="385" width="1" height="1" fill="#b8b8c8"/><rect x="74" y="385" width="1" height="1" fill="#b8b8c8"/><rect x="76" y="385" width="1" height="1" fill="#b8b8c8"/><rect x="78" y="385" width="1" height="1" fill="#b8b8c8"/><rect x="66" y="386" width="13" height="1" fill="#808080"/><rect x="79" y="378" width="1" height="10" fill="#000"/><rect x="66" y="387" width="14" height="1" fill="#000"/><rect x="79" y="399" width="1" height="1" fill="#808080"/><rect x="81" y="399" width="1" height="1" fill="#808080"/><rect x="83" y="399" width="1" height="1" fill="#808080"/><rect x="85" y="399" width="1" height="1" fill="#808080"/><rect x="87" y="399" width="1" height="1" fill="#808080"/><rect x="89" y="392" width="14" height="13" fill="#808080"/><rect x="90" y="393" width="1" height="12" fill="#c8c8c8"/><rect x="91" y="393" width="11" height="2" fill="#0000d0"/><rect x="97" y="394" width="1" height="1" fill="#fff"/><rect x="99" y="394" width="1" height="1" fill="#fff"/><rect x="101" y="394" width="1" height="1" fill="#fff"/><rect x="92" y="397" width="3" height="2" fill="#fff"/><rect x="92" y="400" width="3" height="2" fill="#fff"/><rect x="92" y="403" width="3" height="2" fill="#fff"/><rect x="96" y="397" width="3" height="2" fill="#fff"/><rect x="96" y="400" width="3" height="2" fill="#fff"/><rect x="96" y="403" width="3" height="2" fill="#fff"/><rect x="100" y="397" width="3" height="2" fill="#fff"/><rect x="100" y="400" width="3" height="2" fill="#fff"/><rect x="100" y="403" width="3" height="2" fill="#fff"/><rect x="103" y="392" width="1" height="14" fill="#000"/><rect x="89" y="405" width="15" height="1" fill="#000"/><rect x="79" y="417" width="1" height="1" fill="#808080"/><rect x="81" y="417" width="1" height="1" fill="#808080"/><rect x="83" y="417" width="1" height="1" fill="#808080"/><rect x="85" y="417" width="1" height="1" fill="#808080"/><rect x="87" y="417" width="1" height="1" fill="#808080"/><rect x="89" y="410" width="14" height="13" fill="#808080"/><rect x="90" y="411" width="1" height="12" fill="#c8c8c8"/><rect x="91" y="411" width="11" height="2" fill="#0000d0"/><rect x="97" y="412" width="1" height="1" fill="#fff"/><rect x="99" y="412" width="1" height="1" fill="#fff"/><rect x="101" y="412" width="1" height="1" fill="#fff"/><rect x="92" y="415" width="3" height="2" fill="#fff"/><rect x="92" y="418" width="3" height="2" fill="#fff"/><rect x="92" y="421" width="3" height="2" fill="#fff"/><rect x="96" y="415" width="3" height="2" fill="#fff"/><rect x="96" y="418" width="3" height="2" fill="#fff"/><rect x="96" y="421" width="3" height="2" fill="#fff"/><rect x="100" y="415" width="3" height="2" fill="#fff"/><rect x="100" y="418" width="3" height="2" fill="#fff"/><rect x="100" y="421" width="3" height="2" fill="#fff"/><rect x="103" y="410" width="1" height="14" fill="#000"/><rect x="89" y="423" width="15" height="1" fill="#000"/><rect x="79" y="435" width="1" height="1" fill="#808080"/><rect x="81" y="435" width="1" height="1" fill="#808080"/><rect x="83" y="435" width="1" height="1" fill="#808080"/><rect x="85" y="435" width="1" height="1" fill="#808080"/><rect x="87" y="435" width="1" height="1" fill="#808080"/><rect x="89" y="428" width="15" height="13" fill="#808080"/><rect x="90" y="429" width="13" height="12" fill="#c0c0c0"/><rect x="90" y="429" width="1" height="12" fill="#fff"/><rect x="91" y="429" width="11" height="2" fill="#0000d0"/><rect x="102" y="430" width="1" height="1" fill="#fff"/><rect x="92" y="435" width="10" height="6" fill="#fff"/><rect x="92" y="440" width="11" height="1" fill="#909090"/><rect x="102" y="435" width="1" height="6" fill="#909090"/><rect x="104" y="429" width="1" height="13" fill="#000"/><rect x="89" y="441" width="16" height="1" fill="#000"/><rect x="94" y="436" width="2" height="1" fill="#000"/><rect x="93" y="437" width="1" height="2" fill="#000"/><rect x="96" y="437" width="1" height="2" fill="#000"/><rect x="94" y="439" width="2" height="1" fill="#000"/><rect x="98" y="436" width="1" height="4" fill="#000"/><rect x="99" y="438" width="1" height="1" fill="#000"/><rect x="100" y="437" width="1" height="1" fill="#000"/><rect x="101" y="436" width="1" height="1" fill="#000"/><rect x="100" y="439" width="1" height="1" fill="#000"/><rect x="101" y="440" width="1" height="0" fill="#000"/><rect x="49.5" y="449.5" width="8" height="8" fill="#fff" stroke="#808080"/><rect x="51" y="453" width="5" height="1" fill="#000"/><rect x="53" y="451" width="1" height="5" fill="#000"/><rect x="59" y="453" width="1" height="1" fill="#808080"/><rect x="61" y="453" width="1" height="1" fill="#808080"/><rect x="63" y="453" width="1" height="1" fill="#808080"/><rect x="67" y="447" width="6" height="1" fill="#808080"/><rect x="66" y="448" width="1" height="1" fill="#808080"/><rect x="73" y="448" width="1" height="1" fill="#808080"/><rect x="73" y="449" width="6" height="1" fill="#808080"/><rect x="65" y="449" width="1" height="10" fill="#808080"/><rect x="66" y="448" width="1" height="1" fill="#808080"/><rect x="67" y="448" width="6" height="2" fill="#ffff00"/><rect x="66" y="450" width="13" height="8" fill="#ffff00"/><rect x="66" y="450" width="13" height="1" fill="#fff"/><rect x="66" y="450" width="1" height="8" fill="#fff"/><rect x="68" y="451" width="1" height="1" fill="#b8b8c8"/><rect x="70" y="451" width="1" height="1" fill="#b8b8c8"/><rect x="72" y="451" width="1" height="1" fill="#b8b8c8"/><rect x="74" y="451" width="1" height="1" fill="#b8b8c8"/><rect x="76" y="451" width="1" height="1" fill="#b8b8c8"/><rect x="78" y="451" width="1" height="1" fill="#b8b8c8"/><rect x="67" y="452" width="1" height="1" fill="#b8b8c8"/><rect x="69" y="452" width="1" height="1" fill="#b8b8c8"/><rect x="71" y="452" width="1" height="1" fill="#b8b8c8"/><rect x="73" y="452" width="1" height="1" fill="#b8b8c8"/><rect x="75" y="452" width="1" height="1" fill="#b8b8c8"/><rect x="77" y="452" width="1" height="1" fill="#b8b8c8"/><rect x="68" y="453" width="1" height="1" fill="#b8b8c8"/><rect x="70" y="453" width="1" height="1" fill="#b8b8c8"/><rect x="72" y="453" width="1" height="1" fill="#b8b8c8"/><rect x="74" y="453" width="1" height="1" fill="#b8b8c8"/><rect x="76" y="453" width="1" height="1" fill="#b8b8c8"/><rect x="78" y="453" width="1" height="1" fill="#b8b8c8"/><rect x="67" y="454" width="1" height="1" fill="#b8b8c8"/><rect x="69" y="454" width="1" height="1" fill="#b8b8c8"/><rect x="71" y="454" width="1" height="1" fill="#b8b8c8"/><rect x="73" y="454" width="1" height="1" fill="#b8b8c8"/><rect x="75" y="454" width="1" height="1" fill="#b8b8c8"/><rect x="77" y="454" width="1" height="1" fill="#b8b8c8"/><rect x="68" y="455" width="1" height="1" fill="#b8b8c8"/><rect x="70" y="455" width="1" height="1" fill="#b8b8c8"/><rect x="72" y="455" width="1" height="1" fill="#b8b8c8"/><rect x="74" y="455" width="1" height="1" fill="#b8b8c8"/><rect x="76" y="455" width="1" height="1" fill="#b8b8c8"/><rect x="78" y="455" width="1" height="1" fill="#b8b8c8"/><rect x="67" y="456" width="1" height="1" fill="#b8b8c8"/><rect x="69" y="456" width="1" height="1" fill="#b8b8c8"/><rect x="71" y="456" width="1" height="1" fill="#b8b8c8"/><rect x="73" y="456" width="1" height="1" fill="#b8b8c8"/><rect x="75" y="456" width="1" height="1" fill="#b8b8c8"/><rect x="77" y="456" width="1" height="1" fill="#b8b8c8"/><rect x="68" y="457" width="1" height="1" fill="#b8b8c8"/><rect x="70" y="457" width="1" height="1" fill="#b8b8c8"/><rect x="72" y="457" width="1" height="1" fill="#b8b8c8"/><rect x="74" y="457" width="1" height="1" fill="#b8b8c8"/><rect x="76" y="457" width="1" height="1" fill="#b8b8c8"/><rect x="78" y="457" width="1" height="1" fill="#b8b8c8"/><rect x="66" y="458" width="13" height="1" fill="#808080"/><rect x="79" y="450" width="1" height="10" fill="#000"/><rect x="66" y="459" width="14" height="1" fill="#000"/><rect x="49.5" y="467.5" width="8" height="8" fill="#fff" stroke="#808080"/><rect x="51" y="471" width="5" height="1" fill="#000"/><rect x="53" y="469" width="1" height="5" fill="#000"/><rect x="59" y="471" width="1" height="1" fill="#808080"/><rect x="61" y="471" width="1" height="1" fill="#808080"/><rect x="63" y="471" width="1" height="1" fill="#808080"/><rect x="67" y="465" width="6" height="1" fill="#808080"/><rect x="66" y="466" width="1" height="1" fill="#808080"/><rect x="73" y="466" width="1" height="1" fill="#808080"/><rect x="73" y="467" width="6" height="1" fill="#808080"/><rect x="65" y="467" width="1" height="10" fill="#808080"/><rect x="66" y="466" width="1" height="1" fill="#808080"/><rect x="67" y="466" width="6" height="2" fill="#ffff00"/><rect x="66" y="468" width="13" height="8" fill="#ffff00"/><rect x="66" y="468" width="13" height="1" fill="#fff"/><rect x="66" y="468" width="1" height="8" fill="#fff"/><rect x="68" y="469" width="1" height="1" fill="#b8b8c8"/><rect x="70" y="469" width="1" height="1" fill="#b8b8c8"/><rect x="72" y="469" width="1" height="1" fill="#b8b8c8"/><rect x="74" y="469" width="1" height="1" fill="#b8b8c8"/><rect x="76" y="469" width="1" height="1" fill="#b8b8c8"/><rect x="78" y="469" width="1" height="1" fill="#b8b8c8"/><rect x="67" y="470" width="1" height="1" fill="#b8b8c8"/><rect x="69" y="470" width="1" height="1" fill="#b8b8c8"/><rect x="71" y="470" width="1" height="1" fill="#b8b8c8"/><rect x="73" y="470" width="1" height="1" fill="#b8b8c8"/><rect x="75" y="470" width="1" height="1" fill="#b8b8c8"/><rect x="77" y="470" width="1" height="1" fill="#b8b8c8"/><rect x="68" y="471" width="1" height="1" fill="#b8b8c8"/><rect x="70" y="471" width="1" height="1" fill="#b8b8c8"/><rect x="72" y="471" width="1" height="1" fill="#b8b8c8"/><rect x="74" y="471" width="1" height="1" fill="#b8b8c8"/><rect x="76" y="471" width="1" height="1" fill="#b8b8c8"/><rect x="78" y="471" width="1" height="1" fill="#b8b8c8"/><rect x="67" y="472" width="1" height="1" fill="#b8b8c8"/><rect x="69" y="472" width="1" height="1" fill="#b8b8c8"/><rect x="71" y="472" width="1" height="1" fill="#b8b8c8"/><rect x="73" y="472" width="1" height="1" fill="#b8b8c8"/><rect x="75" y="472" width="1" height="1" fill="#b8b8c8"/><rect x="77" y="472" width="1" height="1" fill="#b8b8c8"/><rect x="68" y="473" width="1" height="1" fill="#b8b8c8"/><rect x="70" y="473" width="1" height="1" fill="#b8b8c8"/><rect x="72" y="473" width="1" height="1" fill="#b8b8c8"/><rect x="74" y="473" width="1" height="1" fill="#b8b8c8"/><rect x="76" y="473" width="1" height="1" fill="#b8b8c8"/><rect x="78" y="473" width="1" height="1" fill="#b8b8c8"/><rect x="67" y="474" width="1" height="1" fill="#b8b8c8"/><rect x="69" y="474" width="1" height="1" fill="#b8b8c8"/><rect x="71" y="474" width="1" height="1" fill="#b8b8c8"/><rect x="73" y="474" width="1" height="1" fill="#b8b8c8"/><rect x="75" y="474" width="1" height="1" fill="#b8b8c8"/><rect x="77" y="474" width="1" height="1" fill="#b8b8c8"/><rect x="68" y="475" width="1" height="1" fill="#b8b8c8"/><rect x="70" y="475" width="1" height="1" fill="#b8b8c8"/><rect x="72" y="475" width="1" height="1" fill="#b8b8c8"/><rect x="74" y="475" width="1" height="1" fill="#b8b8c8"/><rect x="76" y="475" width="1" height="1" fill="#b8b8c8"/><rect x="78" y="475" width="1" height="1" fill="#b8b8c8"/><rect x="66" y="476" width="13" height="1" fill="#808080"/><rect x="79" y="468" width="1" height="10" fill="#000"/><rect x="66" y="477" width="14" height="1" fill="#000"/><rect x="49.5" y="485.5" width="8" height="8" fill="#fff" stroke="#808080"/><rect x="51" y="489" width="5" height="1" fill="#000"/><rect x="53" y="487" width="1" height="5" fill="#000"/><rect x="59" y="489" width="1" height="1" fill="#808080"/><rect x="61" y="489" width="1" height="1" fill="#808080"/><rect x="63" y="489" width="1" height="1" fill="#808080"/><rect x="67" y="483" width="6" height="1" fill="#808080"/><rect x="66" y="484" width="1" height="1" fill="#808080"/><rect x="73" y="484" width="1" height="1" fill="#808080"/><rect x="73" y="485" width="6" height="1" fill="#808080"/><rect x="65" y="485" width="1" height="10" fill="#808080"/><rect x="66" y="484" width="1" height="1" fill="#808080"/><rect x="67" y="484" width="6" height="2" fill="#ffff00"/><rect x="66" y="486" width="13" height="8" fill="#ffff00"/><rect x="66" y="486" width="13" height="1" fill="#fff"/><rect x="66" y="486" width="1" height="8" fill="#fff"/><rect x="68" y="487" width="1" height="1" fill="#b8b8c8"/><rect x="70" y="487" width="1" height="1" fill="#b8b8c8"/><rect x="72" y="487" width="1" height="1" fill="#b8b8c8"/><rect x="74" y="487" width="1" height="1" fill="#b8b8c8"/><rect x="76" y="487" width="1" height="1" fill="#b8b8c8"/><rect x="78" y="487" width="1" height="1" fill="#b8b8c8"/><rect x="67" y="488" width="1" height="1" fill="#b8b8c8"/><rect x="69" y="488" width="1" height="1" fill="#b8b8c8"/><rect x="71" y="488" width="1" height="1" fill="#b8b8c8"/><rect x="73" y="488" width="1" height="1" fill="#b8b8c8"/><rect x="75" y="488" width="1" height="1" fill="#b8b8c8"/><rect x="77" y="488" width="1" height="1" fill="#b8b8c8"/><rect x="68" y="489" width="1" height="1" fill="#b8b8c8"/><rect x="70" y="489" width="1" height="1" fill="#b8b8c8"/><rect x="72" y="489" width="1" height="1" fill="#b8b8c8"/><rect x="74" y="489" width="1" height="1" fill="#b8b8c8"/><rect x="76" y="489" width="1" height="1" fill="#b8b8c8"/><rect x="78" y="489" width="1" height="1" fill="#b8b8c8"/><rect x="67" y="490" width="1" height="1" fill="#b8b8c8"/><rect x="69" y="490" width="1" height="1" fill="#b8b8c8"/><rect x="71" y="490" width="1" height="1" fill="#b8b8c8"/><rect x="73" y="490" width="1" height="1" fill="#b8b8c8"/><rect x="75" y="490" width="1" height="1" fill="#b8b8c8"/><rect x="77" y="490" width="1" height="1" fill="#b8b8c8"/><rect x="68" y="491" width="1" height="1" fill="#b8b8c8"/><rect x="70" y="491" width="1" height="1" fill="#b8b8c8"/><rect x="72" y="491" width="1" height="1" fill="#b8b8c8"/><rect x="74" y="491" width="1" height="1" fill="#b8b8c8"/><rect x="76" y="491" width="1" height="1" fill="#b8b8c8"/><rect x="78" y="491" width="1" height="1" fill="#b8b8c8"/><rect x="67" y="492" width="1" height="1" fill="#b8b8c8"/><rect x="69" y="492" width="1" height="1" fill="#b8b8c8"/><rect x="71" y="492" width="1" height="1" fill="#b8b8c8"/><rect x="73" y="492" width="1" height="1" fill="#b8b8c8"/><rect x="75" y="492" width="1" height="1" fill="#b8b8c8"/><rect x="77" y="492" width="1" height="1" fill="#b8b8c8"/><rect x="68" y="493" width="1" height="1" fill="#b8b8c8"/><rect x="70" y="493" width="1" height="1" fill="#b8b8c8"/><rect x="72" y="493" width="1" height="1" fill="#b8b8c8"/><rect x="74" y="493" width="1" height="1" fill="#b8b8c8"/><rect x="76" y="493" width="1" height="1" fill="#b8b8c8"/><rect x="78" y="493" width="1" height="1" fill="#b8b8c8"/><rect x="66" y="494" width="13" height="1" fill="#808080"/><rect x="79" y="486" width="1" height="10" fill="#000"/><rect x="66" y="495" width="14" height="1" fill="#000"/></svg><span class="t" style="left:94px;top:4px;font-size:12px;transform:scaleX(0.87);transform-origin:0 0;color:#000">Query - Pembayaran Piutang</span><span class="t" style="left:94px;top:22px;font-size:12px;transform:scaleX(0.87);transform-origin:0 0;color:#000">Query - PPN Keluaran</span><span class="t" style="left:94px;top:40px;font-size:12px;transform:scaleX(0.87);transform-origin:0 0;color:#000">Query - Analisa Penjualan</span><span class="t" style="left:94px;top:58px;font-size:12px;transform:scaleX(0.87);transform-origin:0 0;color:#000">Query - Analisa Umur Penjualan</span><span class="t" style="left:94px;top:76px;font-size:12px;transform:scaleX(0.87);transform-origin:0 0;color:#000">Query - Analisa Tunggakan</span><span class="t" style="left:94px;top:94px;font-size:12px;transform:scaleX(0.87);transform-origin:0 0;color:#000">Query - Tagihan Penjualan</span><span class="t" style="left:94px;top:112px;font-size:12px;transform:scaleX(0.87);transform-origin:0 0;color:#000">Query - Total Penjualan Tahunan</span><span class="t" style="left:94px;top:130px;font-size:12px;transform:scaleX(0.87);transform-origin:0 0;color:#000">Grafik - Omzet Penjualan</span><span class="t" style="left:70px;top:148px;font-size:12px;transform:scaleX(0.87);transform-origin:0 0;color:#000">Query - Giro Masuk</span><span class="t" style="left:70px;top:166px;font-size:12px;transform:scaleX(0.87);transform-origin:0 0;color:#000">Query - Laba Rugi Penjualan</span><span class="t" style="left:94px;top:184px;font-size:12px;transform:scaleX(0.87);transform-origin:0 0;color:#000">Query - Laba Rugi Harian</span><span class="t" style="left:94px;top:202px;font-size:12px;transform:scaleX(0.87);transform-origin:0 0;color:#000">Query - Laba Rugi Tahunan</span><span class="t" style="left:94px;top:220px;font-size:12px;transform:scaleX(0.87);transform-origin:0 0;color:#000">Grafik - Laba Rugi Penjualan</span><span class="t" style="left:70px;top:238px;font-size:12px;transform:scaleX(0.87);transform-origin:0 0;color:#000">Query - Point Of Sale</span><span class="t" style="left:70px;top:256px;font-size:12px;transform:scaleX(0.87);transform-origin:0 0;color:#000">Query - Laba Rugi Point Of Sale</span><span class="t" style="left:94px;top:274px;font-size:12px;transform:scaleX(0.87);transform-origin:0 0;color:#000">Query - Laba Rugi Harian Point</span><span class="t" style="left:94px;top:292px;font-size:12px;transform:scaleX(0.87);transform-origin:0 0;color:#000">Query - Laba Rugi Tahunan</span><span class="t" style="left:94px;top:310px;font-size:12px;transform:scaleX(0.87);transform-origin:0 0;color:#000">Grafik - Laba Rugi Penjualan</span><span class="t" style="left:70px;top:328px;font-size:12px;transform:scaleX(0.87);transform-origin:0 0;color:#000">Query - Penerimaan</span><span class="t" style="left:70px;top:346px;font-size:12px;transform:scaleX(0.87);transform-origin:0 0;color:#000">Query - Pemakaian</span><span class="t" style="left:70px;top:364px;font-size:12px;transform:scaleX(0.87);transform-origin:0 0;color:#000">Query - Advanced</span></div><div class="a" style="left:106px;top:246px;width:121px;height:17px;border:1px solid #3c78c8"></div><div class="a" style="left:293px;top:152px;width:780px;height:485px;background:#f0f0f0;border:1px solid #4e4e4e;border-radius:6px 6px 0 0;overflow:hidden"><div class="a" style="left:0;top:0;width:778px;height:26px;background:linear-gradient(#bccedd,#d7e5f1)"></div><div class="a" style="left:0;top:0;width:778px;height:1px;background:#e9f0f6"></div><div class="a" style="left:0;top:25px;width:778px;height:1px;background:#9aa2ac"></div><div class="a" style="left:2px;top:26px;width:776px;height:1px;background:#fff"></div><div class="a" style="left:0;top:26px;width:2px;height:457px;background:#d6e3f0"></div></div><svg style="left:298px;top:159px" width="16" height="14" shape-rendering="crispEdges">
<rect x="0" y="0" width="16" height="14" fill="#000"/><rect x="1" y="1" width="14" height="12" fill="#c0c0c0"/>
<rect x="1" y="1" width="14" height="2" fill="#000080"/><rect x="11" y="1" width="1" height="1" fill="#fff"/><rect x="13" y="1" width="1" height="1" fill="#fff"/>
<rect x="2" y="5" width="4" height="1" fill="#000"/><rect x="7" y="4" width="7" height="3" fill="#000"/><rect x="8" y="5" width="5" height="1" fill="#fff"/>
<rect x="2" y="9" width="4" height="1" fill="#000"/><rect x="7" y="8" width="7" height="3" fill="#000"/><rect x="8" y="9" width="5" height="1" fill="#fff"/>
</svg><span class="t" style="left:318px;top:161px;font-size:12px;color:#a0a0a0;letter-spacing:-0.2px;">Grafik : Omzet Penjualan</span><span class="t" style="left:311px;top:189px;font-size:12px;color:#000;transform:scaleX(0.89);transform-origin:0 0;">Tahun:</span><div class="a" style="left:354px;top:187px;width:47px;height:18px;background:#fff;border-top:1px solid #a0a0a0;border-left:1px solid #a0a0a0;border-right:1px solid #fff;border-bottom:1px solid #fff"></div><div class="a" style="left:355px;top:188px;width:45px;height:1px;background:#696969;"></div><div class="a" style="left:355px;top:188px;width:1px;height:16px;background:#696969;"></div><div class="a" style="left:355px;top:203px;width:45px;height:1px;background:#e3e3e3;"></div><div class="a" style="left:399px;top:188px;width:1px;height:16px;background:#e3e3e3;"></div><span class="t" style="left:357px;top:191px;font-size:12px;color:#000;transform:scaleX(0.89);transform-origin:0 0;">2023</span><div class="a" style="left:296px;top:216px;width:776px;height:420px;background:#c0c0c0;border-top:2px solid #6b6b6b;border-left:2px solid #6b6b6b;border-right:1px solid #fff;border-bottom:1px solid #fff"></div><div class="a" style="left:298px;top:218px;width:772px;height:1px;background:#a0a0a0;"></div><div class="a" style="left:298px;top:218px;width:1px;height:412px;background:#a0a0a0;"></div><div class="a" style="left:1066px;top:218px;width:5px;height:412px;background:#fff;border-left:1px solid #e8e8e8"></div><div class="a" style="left:1071px;top:216px;width:1px;height:420px;background:#fff;"></div><div class="a" style="left:298px;top:630px;width:773px;height:5px;background:#fff;border-top:1px solid #e8e8e8"></div><div class="a" style="left:294px;top:636px;width:778px;height:1px;background:#5f5f5f;"></div><div class="a" style="left:299px;top:219px;width:767px;height:26px;background:#f0f0f0;"></div><div class="a" style="left:329px;top:222px;width:23px;height:22px;border-top:1px solid #fff;border-left:1px solid #fff;border-right:2px solid #808080;border-bottom:2px solid #808080"></div><div class="a" style="left:352px;top:222px;width:23px;height:22px;border-top:1px solid #fff;border-left:1px solid #fff;border-right:2px solid #808080;border-bottom:2px solid #808080"></div><div class="a" style="left:383px;top:222px;width:23px;height:22px;border-top:1px solid #fff;border-left:1px solid #fff;border-right:2px solid #808080;border-bottom:2px solid #808080"></div><div class="a" style="left:406px;top:222px;width:23px;height:22px;border-top:1px solid #fff;border-left:1px solid #fff;border-right:2px solid #808080;border-bottom:2px solid #808080"></div><div class="a" style="left:429px;top:222px;width:23px;height:22px;border-top:1px solid #fff;border-left:1px solid #fff;border-right:2px solid #808080;border-bottom:2px solid #808080"></div><div class="a" style="left:452px;top:222px;width:23px;height:22px;border-top:1px solid #fff;border-left:1px solid #fff;border-right:2px solid #808080;border-bottom:2px solid #808080"></div><div class="a" style="left:475px;top:222px;width:23px;height:22px;border-top:1px solid #fff;border-left:1px solid #fff;border-right:2px solid #808080;border-bottom:2px solid #808080"></div><div class="a" style="left:506px;top:222px;width:23px;height:22px;border-top:1px solid #fff;border-left:1px solid #fff;border-right:2px solid #808080;border-bottom:2px solid #808080"></div><div class="a" style="left:529px;top:222px;width:23px;height:22px;border-top:1px solid #fff;border-left:1px solid #fff;border-right:2px solid #808080;border-bottom:2px solid #808080"></div><div class="a" style="left:552px;top:222px;width:23px;height:22px;border-top:1px solid #fff;border-left:1px solid #fff;border-right:2px solid #808080;border-bottom:2px solid #808080"></div><div class="a" style="left:575px;top:222px;width:23px;height:22px;border-top:1px solid #fff;border-left:1px solid #fff;border-right:2px solid #808080;border-bottom:2px solid #808080"></div><div class="a" style="left:606px;top:222px;width:23px;height:22px;border-top:1px solid #fff;border-left:1px solid #fff;border-right:2px solid #808080;border-bottom:2px solid #808080"></div><div class="a" style="left:629px;top:222px;width:23px;height:22px;border-top:1px solid #fff;border-left:1px solid #fff;border-right:2px solid #808080;border-bottom:2px solid #808080"></div><div class="a" style="left:652px;top:222px;width:23px;height:22px;border-top:1px solid #fff;border-left:1px solid #fff;border-right:2px solid #808080;border-bottom:2px solid #808080"></div><div class="a" style="left:675px;top:222px;width:23px;height:22px;border-top:1px solid #fff;border-left:1px solid #fff;border-right:2px solid #808080;border-bottom:2px solid #808080"></div><div class="a" style="left:698px;top:222px;width:23px;height:22px;border-top:1px solid #fff;border-left:1px solid #fff;border-right:2px solid #808080;border-bottom:2px solid #808080"></div><div class="a" style="left:729px;top:222px;width:23px;height:22px;border-top:1px solid #fff;border-left:1px solid #fff;border-right:2px solid #808080;border-bottom:2px solid #808080"></div><div class="a" style="left:752px;top:222px;width:23px;height:22px;border-top:1px solid #fff;border-left:1px solid #fff;border-right:2px solid #808080;border-bottom:2px solid #808080"></div><div class="a" style="left:306px;top:222px;width:23px;height:22px;border-top:2px solid #808080;border-left:2px solid #808080;border-right:1px solid #fff;border-bottom:1px solid #fff;background:#f8f8f8"></div><svg style="left:0;top:0" width="1366" height="728" shape-rendering="crispEdges"><rect x="312" y="228" width="1" height="12" fill="#000"/><rect x="312" y="239" width="14" height="1" fill="#000"/><rect x="315" y="230" width="2" height="9" fill="#ff0000"/><rect x="319" y="228" width="2" height="11" fill="#ff00ff"/><rect x="323" y="232" width="2" height="7" fill="#0000ff"/><path d="M334.5 238.5v-9l3-3h10v8l-4 4z" fill="#f8f8f8" stroke="#000"/><rect x="335" y="230" width="3" height="8" fill="#00ff00"/><rect x="338" y="229" width="2" height="9" fill="#008000"/><rect x="341" y="229" width="3" height="9" fill="#00ffff"/><rect x="344" y="228" width="2" height="10" fill="#008080"/><rect x="357" y="227" width="1" height="13" fill="#000"/><rect x="357" y="239" width="14" height="1" fill="#000"/><rect x="358" y="229" width="12" height="2" fill="#008000"/><rect x="358" y="234" width="4" height="2" fill="#008000"/><rect x="363" y="227" width="2" height="12" fill="#0000ff"/><rect x="367" y="232" width="2" height="7" fill="#0000ff"/><rect x="387" y="226" width="15" height="13" fill="#800080"/><rect x="388" y="229" width="13" height="9" fill="#fff"/><rect x="388" y="227" width="1" height="1" fill="#ffff00"/><rect x="392" y="227" width="1" height="1" fill="#ffff00"/><rect x="396" y="227" width="1" height="1" fill="#ffff00"/><rect x="400" y="227" width="1" height="1" fill="#ffff00"/><rect x="389" y="230" width="11" height="1" fill="#000"/><rect x="389" y="232" width="11" height="1" fill="#000"/><rect x="389" y="234" width="11" height="1" fill="#000"/><rect x="389" y="236" width="11" height="1" fill="#000"/><rect x="392" y="230" width="1" height="1" fill="#ffff00"/><rect x="392" y="231" width="1" height="1" fill="#ffff00"/><rect x="392" y="232" width="1" height="1" fill="#ffff00"/><rect x="392" y="233" width="1" height="1" fill="#ffff00"/><rect x="392" y="234" width="1" height="1" fill="#ffff00"/><rect x="392" y="235" width="1" height="1" fill="#ffff00"/><rect x="392" y="236" width="1" height="1" fill="#ffff00"/><rect x="396" y="230" width="1" height="1" fill="#ffff00"/><rect x="396" y="231" width="1" height="1" fill="#ffff00"/><rect x="396" y="232" width="1" height="1" fill="#ffff00"/><rect x="396" y="233" width="1" height="1" fill="#ffff00"/><rect x="396" y="234" width="1" height="1" fill="#ffff00"/><rect x="396" y="235" width="1" height="1" fill="#ffff00"/><rect x="396" y="236" width="1" height="1" fill="#ffff00"/><text x="408.5" y="236" font-family="Liberation Serif" font-weight="bold" font-size="10.5" fill="#000080">A</text><text x="416" y="236" font-family="Liberation Serif" font-weight="bold" font-size="7.5" fill="#000080">BC</text><text x="432.5" y="230" font-family="Liberation Sans" font-weight="bold" font-size="5" fill="#000">1</text><text x="432.5" y="235" font-family="Liberation Sans" font-weight="bold" font-size="5" fill="#000">2</text><text x="432.5" y="240" font-family="Liberation Sans" font-weight="bold" font-size="5" fill="#000">3</text><rect x="441" y="226" width="1" height="1" fill="#808080"/><rect x="441" y="228" width="1" height="1" fill="#808080"/><rect x="441" y="230" width="1" height="1" fill="#808080"/><rect x="441" y="232" width="1" height="1" fill="#808080"/><rect x="441" y="234" width="1" height="1" fill="#808080"/><rect x="441" y="236" width="1" height="1" fill="#808080"/><rect x="441" y="238" width="1" height="1" fill="#808080"/><rect x="444" y="226" width="1" height="1" fill="#808080"/><rect x="444" y="228" width="1" height="1" fill="#808080"/><rect x="444" y="230" width="1" height="1" fill="#808080"/><rect x="444" y="232" width="1" height="1" fill="#808080"/><rect x="444" y="234" width="1" height="1" fill="#808080"/><rect x="444" y="236" width="1" height="1" fill="#808080"/><rect x="444" y="238" width="1" height="1" fill="#808080"/><rect x="447" y="226" width="1" height="1" fill="#808080"/><rect x="447" y="228" width="1" height="1" fill="#808080"/><rect x="447" y="230" width="1" height="1" fill="#808080"/><rect x="447" y="232" width="1" height="1" fill="#808080"/><rect x="447" y="234" width="1" height="1" fill="#808080"/><rect x="447" y="236" width="1" height="1" fill="#808080"/><rect x="447" y="238" width="1" height="1" fill="#808080"/><rect x="436" y="228" width="1" height="1" fill="#808080"/><rect x="438" y="228" width="1" height="1" fill="#808080"/><rect x="440" y="228" width="1" height="1" fill="#808080"/><rect x="442" y="228" width="1" height="1" fill="#808080"/><rect x="444" y="228" width="1" height="1" fill="#808080"/><rect x="446" y="228" width="1" height="1" fill="#808080"/><rect x="448" y="228" width="1" height="1" fill="#808080"/><rect x="441" y="228" width="1" height="1" fill="#000"/><rect x="444" y="228" width="1" height="1" fill="#000"/><rect x="447" y="228" width="1" height="1" fill="#000"/><rect x="436" y="231" width="1" height="1" fill="#808080"/><rect x="438" y="231" width="1" height="1" fill="#808080"/><rect x="440" y="231" width="1" height="1" fill="#808080"/><rect x="442" y="231" width="1" height="1" fill="#808080"/><rect x="444" y="231" width="1" height="1" fill="#808080"/><rect x="446" y="231" width="1" height="1" fill="#808080"/><rect x="448" y="231" width="1" height="1" fill="#808080"/><rect x="441" y="231" width="1" height="1" fill="#000"/><rect x="444" y="231" width="1" height="1" fill="#000"/><rect x="447" y="231" width="1" height="1" fill="#000"/><rect x="436" y="234" width="1" height="1" fill="#808080"/><rect x="438" y="234" width="1" height="1" fill="#808080"/><rect x="440" y="234" width="1" height="1" fill="#808080"/><rect x="442" y="234" width="1" height="1" fill="#808080"/><rect x="444" y="234" width="1" height="1" fill="#808080"/><rect x="446" y="234" width="1" height="1" fill="#808080"/><rect x="448" y="234" width="1" height="1" fill="#808080"/><rect x="441" y="234" width="1" height="1" fill="#000"/><rect x="444" y="234" width="1" height="1" fill="#000"/><rect x="447" y="234" width="1" height="1" fill="#000"/><rect x="438" y="226" width="1" height="12" fill="#0000a0"/><rect x="438" y="237" width="10" height="1" fill="#0000a0"/><rect x="457" y="225" width="1" height="1" fill="#0000ff"/><rect x="458" y="225" width="1" height="1" fill="#0000ff"/><rect x="459" y="225" width="1" height="1" fill="#0000ff"/><rect x="460" y="225" width="1" height="1" fill="#0000ff"/><rect x="456" y="226" width="1" height="1" fill="#0000ff"/><rect x="461" y="226" width="1" height="1" fill="#0000ff"/><rect x="461" y="227" width="1" height="1" fill="#0000ff"/><rect x="461" y="228" width="1" height="1" fill="#0000ff"/><rect x="458" y="229" width="1" height="1" fill="#0000ff"/><rect x="459" y="229" width="1" height="1" fill="#0000ff"/><rect x="460" y="229" width="1" height="1" fill="#0000ff"/><rect x="461" y="230" width="1" height="1" fill="#0000ff"/><rect x="461" y="231" width="1" height="1" fill="#0000ff"/><rect x="456" y="232" width="1" height="1" fill="#0000ff"/><rect x="461" y="232" width="1" height="1" fill="#0000ff"/><rect x="457" y="233" width="1" height="1" fill="#0000ff"/><rect x="458" y="233" width="1" height="1" fill="#0000ff"/><rect x="459" y="233" width="1" height="1" fill="#0000ff"/><rect x="460" y="233" width="1" height="1" fill="#0000ff"/><rect x="463" y="225" width="1" height="1" fill="#0000ff"/><rect x="464" y="225" width="1" height="1" fill="#0000ff"/><rect x="465" y="225" width="1" height="1" fill="#0000ff"/><rect x="466" y="225" width="1" height="1" fill="#0000ff"/><rect x="467" y="225" width="1" height="1" fill="#0000ff"/><rect x="468" y="225" width="1" height="1" fill="#0000ff"/><rect x="464" y="226" width="1" height="1" fill="#0000ff"/><rect x="469" y="226" width="1" height="1" fill="#0000ff"/><rect x="464" y="227" width="1" height="1" fill="#0000ff"/><rect x="470" y="227" width="1" height="1" fill="#0000ff"/><rect x="464" y="228" width="1" height="1" fill="#0000ff"/><rect x="470" y="228" width="1" height="1" fill="#0000ff"/><rect x="464" y="229" width="1" height="1" fill="#0000ff"/><rect x="470" y="229" width="1" height="1" fill="#0000ff"/><rect x="464" y="230" width="1" height="1" fill="#0000ff"/><rect x="470" y="230" width="1" height="1" fill="#0000ff"/><rect x="464" y="231" width="1" height="1" fill="#0000ff"/><rect x="470" y="231" width="1" height="1" fill="#0000ff"/><rect x="464" y="232" width="1" height="1" fill="#0000ff"/><rect x="469" y="232" width="1" height="1" fill="#0000ff"/><rect x="463" y="233" width="1" height="1" fill="#0000ff"/><rect x="464" y="233" width="1" height="1" fill="#0000ff"/><rect x="465" y="233" width="1" height="1" fill="#0000ff"/><rect x="466" y="233" width="1" height="1" fill="#0000ff"/><rect x="467" y="233" width="1" height="1" fill="#0000ff"/><rect x="468" y="233" width="1" height="1" fill="#0000ff"/><path d="M456 235h4l-1.5 1.5 2 2h1.5v-1.5h1v1.5h2v-1.5h1v1.5h1.5l2-2-1.5-1.5h4v4l-1.2-1.2-2.3 2.2h-9l-2.3-2.2-1.2 1.2z" fill="#000"/><rect x="459.5" y="238" width="1" height="1" fill="#f0f0f0"/><path d="M480.5 229.5c0-4 5.5-5 7-2" fill="none" stroke="#ff0000" stroke-width="1.4"/><path d="M485.5 229.5h3.8v-3.8z" fill="#ff0000"/><path d="M480 231.5h2.5l1 1v5 M483.5 234.5h-3l-1 1v1l1 1h2.5" fill="none" stroke="#800000" stroke-width="1.1"/><path d="M485 238.5h3.5M490.5 238.5h3.5M486.7 238.5l2.8-6.5 2.8 6.5M488 235.5h3" fill="none" stroke="#800000" stroke-width="1.2"/><rect x="511" y="226" width="1" height="1" fill="#000"/><rect x="513" y="226" width="1" height="1" fill="#000"/><rect x="515" y="226" width="1" height="1" fill="#000"/><rect x="517" y="226" width="1" height="1" fill="#000"/><rect x="519" y="226" width="1" height="1" fill="#000"/><rect x="521" y="226" width="1" height="1" fill="#000"/><rect x="523" y="226" width="1" height="1" fill="#000"/><rect x="522" y="227" width="1" height="1" fill="#000"/><rect x="511" y="228" width="1" height="1" fill="#000"/><rect x="521" y="228" width="1" height="1" fill="#000"/><rect x="523" y="228" width="1" height="1" fill="#000"/><rect x="522" y="229" width="1" height="1" fill="#000"/><rect x="511" y="230" width="1" height="1" fill="#000"/><rect x="521" y="230" width="1" height="1" fill="#000"/><rect x="523" y="230" width="1" height="1" fill="#000"/><rect x="522" y="231" width="1" height="1" fill="#000"/><rect x="511" y="232" width="1" height="1" fill="#000"/><rect x="521" y="232" width="1" height="1" fill="#000"/><rect x="523" y="232" width="1" height="1" fill="#000"/><rect x="522" y="233" width="1" height="1" fill="#000"/><rect x="511" y="234" width="1" height="1" fill="#000"/><rect x="521" y="234" width="1" height="1" fill="#000"/><rect x="523" y="234" width="1" height="1" fill="#000"/><rect x="522" y="235" width="1" height="1" fill="#000"/><rect x="511" y="236" width="1" height="1" fill="#000"/><rect x="521" y="236" width="1" height="1" fill="#000"/><rect x="523" y="236" width="1" height="1" fill="#000"/><rect x="522" y="237" width="1" height="1" fill="#000"/><rect x="511" y="238" width="1" height="1" fill="#000"/><rect x="513" y="238" width="1" height="1" fill="#000"/><rect x="515" y="238" width="1" height="1" fill="#000"/><rect x="517" y="238" width="1" height="1" fill="#000"/><rect x="519" y="238" width="1" height="1" fill="#000"/><rect x="521" y="238" width="1" height="1" fill="#000"/><rect x="523" y="238" width="1" height="1" fill="#000"/><path d="M512 227.5h3.5l2 2 2-2h2.5v2.5l-2 2.5 2 2.5v3h-3l-1.5-2-1.5 2h-3.5v-3l2-2.5-2-2.5z" fill="#000080"/><path d="M513 230l2-1 2.5 2 2.5-2 2 1-2 2.5 2 2.5-2 1.5-2.5-2-2.5 2-2-1.5 2-2.5z" fill="#f8f8f8"/><rect x="515" y="229" width="1" height="1" fill="#00ff00"/><rect x="517" y="229" width="1" height="1" fill="#00ff00"/><rect x="519" y="229" width="1" height="1" fill="#00ff00"/><rect x="514" y="230" width="1" height="1" fill="#00ff00"/><rect x="516" y="230" width="1" height="1" fill="#00ff00"/><rect x="518" y="230" width="1" height="1" fill="#00ff00"/><rect x="520" y="230" width="1" height="1" fill="#00ff00"/><rect x="513" y="231" width="1" height="1" fill="#00ff00"/><rect x="515" y="231" width="1" height="1" fill="#00ff00"/><rect x="517" y="231" width="1" height="1" fill="#00ff00"/><rect x="519" y="231" width="1" height="1" fill="#00ff00"/><rect x="521" y="231" width="1" height="1" fill="#00ff00"/><rect x="514" y="232" width="1" height="1" fill="#00ff00"/><rect x="516" y="232" width="1" height="1" fill="#00ff00"/><rect x="518" y="232" width="1" height="1" fill="#00ff00"/><rect x="520" y="232" width="1" height="1" fill="#00ff00"/><rect x="513" y="233" width="1" height="1" fill="#00ff00"/><rect x="515" y="233" width="1" height="1" fill="#00ff00"/><rect x="517" y="233" width="1" height="1" fill="#00ff00"/><rect x="519" y="233" width="1" height="1" fill="#00ff00"/><rect x="521" y="233" width="1" height="1" fill="#00ff00"/><rect x="514" y="234" width="1" height="1" fill="#00ff00"/><rect x="516" y="234" width="1" height="1" fill="#00ff00"/><rect x="518" y="234" width="1" height="1" fill="#00ff00"/><rect x="520" y="234" width="1" height="1" fill="#00ff00"/><rect x="515" y="235" width="1" height="1" fill="#00ff00"/><rect x="517" y="235" width="1" height="1" fill="#00ff00"/><rect x="519" y="235" width="1" height="1" fill="#00ff00"/><rect x="516" y="236" width="1" height="1" fill="#00ff00"/><rect x="518" y="236" width="1" height="1" fill="#00ff00"/><path d="M536 238c1-5 5-10 10-11" fill="none" stroke="#000" stroke-width="1.2"/><rect x="538" y="227" width="3" height="1" fill="#ff0000"/><rect x="539" y="226" width="1" height="3" fill="#ff0000"/><rect x="534" y="231" width="3" height="1" fill="#ff0000"/><rect x="535" y="230" width="1" height="3" fill="#ff0000"/><rect x="543" y="231" width="3" height="1" fill="#ff0000"/><rect x="544" y="230" width="1" height="3" fill="#ff0000"/><rect x="533" y="235" width="3" height="1" fill="#ff0000"/><rect x="534" y="234" width="1" height="3" fill="#ff0000"/><rect x="538" y="236" width="3" height="1" fill="#ff0000"/><rect x="539" y="235" width="1" height="3" fill="#ff0000"/><rect x="559" y="228" width="6" height="11" fill="#800080"/><rect x="564" y="233" width="7" height="6" fill="#800080"/><rect x="560" y="229" width="3" height="4" fill="#00ffff"/><rect x="561" y="230" width="1" height="1" fill="#fff"/><rect x="560" y="234" width="3" height="4" fill="#00ffff"/><rect x="566" y="234" width="4" height="4" fill="#00ffff"/><rect x="564" y="236" width="1" height="2" fill="#f0f0f0"/><path d="M557 228.5l8 8" stroke="#800080" stroke-width="2.2"/><path d="M564 235.5l5.5-6.5" stroke="#800080" stroke-width="2.2"/><path d="M567 228h3.5v4z" fill="#800080"/><rect x="586" y="228" width="1" height="9" fill="#000"/><rect x="585" y="228" width="3" height="1" fill="#000"/><rect x="585" y="236" width="3" height="1" fill="#000"/><rect x="582" y="233" width="10" height="1" fill="#000"/><rect x="582" y="232" width="1" height="3" fill="#000"/><rect x="591" y="232" width="1" height="3" fill="#000"/><path d="M586.5 230.5l3 3-3 3-3-3z" fill="#ff0000"/><rect x="610" y="227" width="11" height="8" fill="#ffff00"/><rect x="611" y="227" width="1" height="1" fill="#f8f8f8"/><rect x="613" y="227" width="1" height="1" fill="#f8f8f8"/><rect x="615" y="227" width="1" height="1" fill="#f8f8f8"/><rect x="617" y="227" width="1" height="1" fill="#f8f8f8"/><rect x="619" y="227" width="1" height="1" fill="#f8f8f8"/><rect x="610" y="228" width="1" height="1" fill="#f8f8f8"/><rect x="612" y="228" width="1" height="1" fill="#f8f8f8"/><rect x="614" y="228" width="1" height="1" fill="#f8f8f8"/><rect x="616" y="228" width="1" height="1" fill="#f8f8f8"/><rect x="618" y="228" width="1" height="1" fill="#f8f8f8"/><rect x="620" y="228" width="1" height="1" fill="#f8f8f8"/><rect x="611" y="229" width="1" height="1" fill="#f8f8f8"/><rect x="613" y="229" width="1" height="1" fill="#f8f8f8"/><rect x="615" y="229" width="1" height="1" fill="#f8f8f8"/><rect x="617" y="229" width="1" height="1" fill="#f8f8f8"/><rect x="619" y="229" width="1" height="1" fill="#f8f8f8"/><rect x="610" y="230" width="1" height="1" fill="#f8f8f8"/><rect x="612" y="230" width="1" height="1" fill="#f8f8f8"/><rect x="614" y="230" width="1" height="1" fill="#f8f8f8"/><rect x="616" y="230" width="1" height="1" fill="#f8f8f8"/><rect x="618" y="230" width="1" height="1" fill="#f8f8f8"/><rect x="620" y="230" width="1" height="1" fill="#f8f8f8"/><rect x="611" y="231" width="1" height="1" fill="#f8f8f8"/><rect x="613" y="231" width="1" height="1" fill="#f8f8f8"/><rect x="615" y="231" width="1" height="1" fill="#f8f8f8"/><rect x="617" y="231" width="1" height="1" fill="#f8f8f8"/><rect x="619" y="231" width="1" height="1" fill="#f8f8f8"/><rect x="610" y="232" width="1" height="1" fill="#f8f8f8"/><rect x="612" y="232" width="1" height="1" fill="#f8f8f8"/><rect x="614" y="232" width="1" height="1" fill="#f8f8f8"/><rect x="616" y="232" width="1" height="1" fill="#f8f8f8"/><rect x="618" y="232" width="1" height="1" fill="#f8f8f8"/><rect x="620" y="232" width="1" height="1" fill="#f8f8f8"/><rect x="611" y="233" width="1" height="1" fill="#f8f8f8"/><rect x="613" y="233" width="1" height="1" fill="#f8f8f8"/><rect x="615" y="233" width="1" height="1" fill="#f8f8f8"/><rect x="617" y="233" width="1" height="1" fill="#f8f8f8"/><rect x="619" y="233" width="1" height="1" fill="#f8f8f8"/><rect x="610" y="234" width="1" height="1" fill="#f8f8f8"/><rect x="612" y="234" width="1" height="1" fill="#f8f8f8"/><rect x="614" y="234" width="1" height="1" fill="#f8f8f8"/><rect x="616" y="234" width="1" height="1" fill="#f8f8f8"/><rect x="618" y="234" width="1" height="1" fill="#f8f8f8"/><rect x="620" y="234" width="1" height="1" fill="#f8f8f8"/><rect x="621" y="229" width="2" height="8" fill="#000"/><rect x="612" y="235" width="11" height="2" fill="#000"/><rect x="611" y="228" width="1" height="6" fill="#000"/><rect x="611" y="233" width="9" height="1" fill="#000"/><rect x="612" y="231" width="1" height="1" fill="#000"/><rect x="613" y="230" width="1" height="1" fill="#000"/><rect x="614" y="229" width="1" height="1" fill="#000"/><rect x="615" y="230" width="1" height="1" fill="#000"/><rect x="616" y="231" width="1" height="1" fill="#000"/><rect x="617" y="232" width="1" height="1" fill="#000"/><rect x="618" y="231" width="1" height="1" fill="#000"/><rect x="619" y="230" width="1" height="1" fill="#000"/><rect x="632" y="227" width="3" height="3" fill="#000080"/><rect x="633" y="228" width="1" height="1" fill="#f0f0f0"/><rect x="636" y="228" width="3" height="1" fill="#000"/><rect x="640" y="227" width="3" height="3" fill="#000080"/><rect x="641" y="228" width="1" height="1" fill="#f0f0f0"/><rect x="644" y="228" width="3" height="1" fill="#000"/><rect x="632" y="232" width="3" height="3" fill="#000080"/><rect x="633" y="233" width="1" height="1" fill="#f0f0f0"/><rect x="636" y="233" width="3" height="1" fill="#000"/><rect x="640" y="232" width="3" height="3" fill="#000080"/><rect x="641" y="233" width="1" height="1" fill="#f0f0f0"/><rect x="644" y="233" width="3" height="1" fill="#000"/><rect x="632" y="237" width="3" height="3" fill="#000080"/><rect x="633" y="238" width="1" height="1" fill="#f0f0f0"/><rect x="636" y="238" width="3" height="1" fill="#000"/><rect x="640" y="237" width="3" height="3" fill="#000080"/><rect x="641" y="238" width="1" height="1" fill="#f0f0f0"/><rect x="644" y="238" width="3" height="1" fill="#000"/><path d="M656.5 232.5l3.5-4h9.5v8h-9.5z" fill="#ffff80" stroke="#000" stroke-width="1.2"/><path d="M659.5 231.5l1 1-1 1-1-1z" fill="#f0f0f0" stroke="#000" stroke-width="0.7"/><path d="M683.5 231l4.5-4.5h6l-3 4" fill="#fff" stroke="#000" stroke-width="1.2"/><rect x="680" y="231" width="14" height="7" fill="#00ffff"/><rect x="681" y="231" width="1" height="1" fill="#f8f8f8"/><rect x="683" y="231" width="1" height="1" fill="#f8f8f8"/><rect x="685" y="231" width="1" height="1" fill="#f8f8f8"/><rect x="687" y="231" width="1" height="1" fill="#f8f8f8"/><rect x="689" y="231" width="1" height="1" fill="#f8f8f8"/><rect x="691" y="231" width="1" height="1" fill="#f8f8f8"/><rect x="693" y="231" width="1" height="1" fill="#f8f8f8"/><rect x="680" y="232" width="1" height="1" fill="#f8f8f8"/><rect x="682" y="232" width="1" height="1" fill="#f8f8f8"/><rect x="684" y="232" width="1" height="1" fill="#f8f8f8"/><rect x="686" y="232" width="1" height="1" fill="#f8f8f8"/><rect x="688" y="232" width="1" height="1" fill="#f8f8f8"/><rect x="690" y="232" width="1" height="1" fill="#f8f8f8"/><rect x="692" y="232" width="1" height="1" fill="#f8f8f8"/><rect x="681" y="233" width="1" height="1" fill="#f8f8f8"/><rect x="683" y="233" width="1" height="1" fill="#f8f8f8"/><rect x="685" y="233" width="1" height="1" fill="#f8f8f8"/><rect x="687" y="233" width="1" height="1" fill="#f8f8f8"/><rect x="689" y="233" width="1" height="1" fill="#f8f8f8"/><rect x="691" y="233" width="1" height="1" fill="#f8f8f8"/><rect x="693" y="233" width="1" height="1" fill="#f8f8f8"/><rect x="680" y="234" width="1" height="1" fill="#f8f8f8"/><rect x="682" y="234" width="1" height="1" fill="#f8f8f8"/><rect x="684" y="234" width="1" height="1" fill="#f8f8f8"/><rect x="686" y="234" width="1" height="1" fill="#f8f8f8"/><rect x="688" y="234" width="1" height="1" fill="#f8f8f8"/><rect x="690" y="234" width="1" height="1" fill="#f8f8f8"/><rect x="692" y="234" width="1" height="1" fill="#f8f8f8"/><rect x="681" y="235" width="1" height="1" fill="#f8f8f8"/><rect x="683" y="235" width="1" height="1" fill="#f8f8f8"/><rect x="685" y="235" width="1" height="1" fill="#f8f8f8"/><rect x="687" y="235" width="1" height="1" fill="#f8f8f8"/><rect x="689" y="235" width="1" height="1" fill="#f8f8f8"/><rect x="691" y="235" width="1" height="1" fill="#f8f8f8"/><rect x="693" y="235" width="1" height="1" fill="#f8f8f8"/><rect x="680" y="236" width="1" height="1" fill="#f8f8f8"/><rect x="682" y="236" width="1" height="1" fill="#f8f8f8"/><rect x="684" y="236" width="1" height="1" fill="#f8f8f8"/><rect x="686" y="236" width="1" height="1" fill="#f8f8f8"/><rect x="688" y="236" width="1" height="1" fill="#f8f8f8"/><rect x="690" y="236" width="1" height="1" fill="#f8f8f8"/><rect x="692" y="236" width="1" height="1" fill="#f8f8f8"/><rect x="681" y="237" width="1" height="1" fill="#f8f8f8"/><rect x="683" y="237" width="1" height="1" fill="#f8f8f8"/><rect x="685" y="237" width="1" height="1" fill="#f8f8f8"/><rect x="687" y="237" width="1" height="1" fill="#f8f8f8"/><rect x="689" y="237" width="1" height="1" fill="#f8f8f8"/><rect x="691" y="237" width="1" height="1" fill="#f8f8f8"/><rect x="693" y="237" width="1" height="1" fill="#f8f8f8"/><path d="M679.5 238.5v-7.5h14.5v7.5z" fill="none" stroke="#000" stroke-width="1.2"/><rect x="687" y="233" width="5" height="1" fill="#000"/><rect x="687" y="235" width="5" height="1" fill="#000"/><path d="M705.5 239.5l1-5 6-8.5 2 1.5-6 8.5z" fill="#f0f0f0" stroke="#a8a8a8"/><rect x="738" y="226" width="1" height="1" fill="#000"/><rect x="739" y="226" width="1" height="1" fill="#000"/><rect x="740" y="226" width="1" height="1" fill="#000"/><rect x="741" y="226" width="1" height="1" fill="#000"/><rect x="742" y="226" width="1" height="1" fill="#000"/><rect x="743" y="226" width="1" height="1" fill="#000"/><rect x="737" y="227" width="1" height="1" fill="#000"/><rect x="738" y="227" width="1" height="1" fill="#ffff00"/><rect x="739" y="227" width="1" height="1" fill="#ffff00"/><rect x="740" y="227" width="1" height="1" fill="#ffff00"/><rect x="741" y="227" width="1" height="1" fill="#ffff00"/><rect x="742" y="227" width="1" height="1" fill="#ffff00"/><rect x="743" y="227" width="1" height="1" fill="#ffff00"/><rect x="744" y="227" width="1" height="1" fill="#000"/><rect x="736" y="228" width="1" height="1" fill="#000"/><rect x="737" y="228" width="1" height="1" fill="#ffff00"/><rect x="738" y="228" width="1" height="1" fill="#ffff00"/><rect x="739" y="228" width="1" height="1" fill="#000"/><rect x="740" y="228" width="1" height="1" fill="#000"/><rect x="741" y="228" width="1" height="1" fill="#000"/><rect x="742" y="228" width="1" height="1" fill="#000"/><rect x="743" y="228" width="1" height="1" fill="#ffff00"/><rect x="744" y="228" width="1" height="1" fill="#ffff00"/><rect x="745" y="228" width="1" height="1" fill="#000"/><rect x="736" y="229" width="1" height="1" fill="#000"/><rect x="737" y="229" width="1" height="1" fill="#ffff00"/><rect x="738" y="229" width="1" height="1" fill="#ffff00"/><rect x="739" y="229" width="1" height="1" fill="#000"/><rect x="742" y="229" width="1" height="1" fill="#000"/><rect x="743" y="229" width="1" height="1" fill="#ffff00"/><rect x="744" y="229" width="1" height="1" fill="#ffff00"/><rect x="745" y="229" width="1" height="1" fill="#000"/><rect x="736" y="230" width="1" height="1" fill="#000"/><rect x="737" y="230" width="1" height="1" fill="#000"/><rect x="738" y="230" width="1" height="1" fill="#000"/><rect x="739" y="230" width="1" height="1" fill="#000"/><rect x="742" y="230" width="1" height="1" fill="#000"/><rect x="743" y="230" width="1" height="1" fill="#ffff00"/><rect x="744" y="230" width="1" height="1" fill="#ffff00"/><rect x="745" y="230" width="1" height="1" fill="#000"/><rect x="740" y="231" width="1" height="1" fill="#000"/><rect x="741" y="231" width="1" height="1" fill="#000"/><rect x="742" y="231" width="1" height="1" fill="#ffff00"/><rect x="743" y="231" width="1" height="1" fill="#ffff00"/><rect x="744" y="231" width="1" height="1" fill="#000"/><rect x="739" y="232" width="1" height="1" fill="#000"/><rect x="740" y="232" width="1" height="1" fill="#ffff00"/><rect x="741" y="232" width="1" height="1" fill="#ffff00"/><rect x="742" y="232" width="1" height="1" fill="#ffff00"/><rect x="743" y="232" width="1" height="1" fill="#000"/><rect x="739" y="233" width="1" height="1" fill="#000"/><rect x="740" y="233" width="1" height="1" fill="#ffff00"/><rect x="741" y="233" width="1" height="1" fill="#ffff00"/><rect x="742" y="233" width="1" height="1" fill="#000"/><rect x="739" y="234" width="1" height="1" fill="#000"/><rect x="740" y="234" width="1" height="1" fill="#000"/><rect x="741" y="234" width="1" height="1" fill="#000"/><rect x="742" y="234" width="1" height="1" fill="#000"/><rect x="739" y="236" width="1" height="1" fill="#000"/><rect x="740" y="236" width="1" height="1" fill="#000"/><rect x="741" y="236" width="1" height="1" fill="#000"/><rect x="742" y="236" width="1" height="1" fill="#000"/><rect x="738" y="237" width="1" height="1" fill="#000"/><rect x="739" y="237" width="1" height="1" fill="#ffff00"/><rect x="740" y="237" width="1" height="1" fill="#ffff00"/><rect x="741" y="237" width="1" height="1" fill="#ffff00"/><rect x="742" y="237" width="1" height="1" fill="#ffff00"/><rect x="743" y="237" width="1" height="1" fill="#000"/><rect x="738" y="238" width="1" height="1" fill="#000"/><rect x="739" y="238" width="1" height="1" fill="#ffff00"/><rect x="740" y="238" width="1" height="1" fill="#ffff00"/><rect x="741" y="238" width="1" height="1" fill="#ffff00"/><rect x="742" y="238" width="1" height="1" fill="#ffff00"/><rect x="743" y="238" width="1" height="1" fill="#000"/><rect x="739" y="239" width="1" height="1" fill="#000"/><rect x="740" y="239" width="1" height="1" fill="#000"/><rect x="741" y="239" width="1" height="1" fill="#000"/><rect x="742" y="239" width="1" height="1" fill="#000"/><circle cx="761.5" cy="231" r="5" fill="none" stroke="#000" stroke-width="1.3" shape-rendering="auto"/><path d="M765.3 234.8l4.7 4.4" stroke="#000" stroke-width="2"/></svg><svg style="left:0;top:0" width="1366" height="728"><path d="M679.5 437.5L679.5 282.0A155.5 155.5 0 0 1 786.5391365203787 550.2957146924107Z" fill="#00ffff"/><path d="M679.5 437.5L786.5391365203787 550.2957146924107A155.5 155.5 0 1 1 628.1050119330937 290.73895202880783Z" fill="#00ff00"/><path d="M679.5 437.5L628.1050119330937 290.73895202880783A155.5 155.5 0 0 1 679.5 282.0Z" fill="#0000ff"/></svg><div class="a" style="left:897px;top:71px;width:373px;height:453px;background:#f0f0f0;border:1px solid #7a7a7a;box-shadow:0 2px 14px 2px rgba(0,0,0,0.32)"></div><div class="a" style="left:898px;top:72px;width:371px;height:25px;background:#fff;"></div><span class="t" style="left:901px;top:78px;font-size:12px;color:#000;">Graph Control</span><svg style="left:1248px;top:78px" width="12" height="12"><path d="M1 1l10 10M11 1l-10 10" stroke="#000" stroke-width="1.2"/></svg><div class="a" style="left:907px;top:108px;width:79px;height:19px;border-top:1px solid #fff;border-left:1px solid #fff;border-top-left-radius:2px"></div><div class="a" style="left:984px;top:109px;width:1px;height:18px;background:#a0a0a0"></div><div class="a" style="left:985px;top:109px;width:1px;height:18px;background:#000"></div><span class="t" style="left:892.5px;top:112px;width:108px;text-align:center;font-size:12px;color:#000;transform:scaleX(0.87);transform-origin:50% 0;">Labels</span><div class="a" style="left:986px;top:108px;width:84px;height:19px;border-top:1px solid #fff;border-left:1px solid #fff;border-top-left-radius:2px"></div><div class="a" style="left:1068px;top:109px;width:1px;height:18px;background:#a0a0a0"></div><div class="a" style="left:1069px;top:109px;width:1px;height:18px;background:#000"></div><span class="t" style="left:971.5px;top:112px;width:113px;text-align:center;font-size:12px;color:#000;transform:scaleX(0.87);transform-origin:50% 0;">System</span><div class="a" style="left:1070px;top:108px;width:77px;height:19px;border-top:1px solid #fff;border-left:1px solid #fff;border-top-left-radius:2px"></div><div class="a" style="left:1145px;top:109px;width:1px;height:18px;background:#a0a0a0"></div><div class="a" style="left:1146px;top:109px;width:1px;height:18px;background:#000"></div><span class="t" style="left:1055.5px;top:112px;width:106px;text-align:center;font-size:12px;color:#000;transform:scaleX(0.87);transform-origin:50% 0;">About</span><div class="a" style="left:1147px;top:108px;width:114px;height:19px;border-top:1px solid #fff;border-left:1px solid #fff;border-top-left-radius:2px"></div><div class="a" style="left:1259px;top:109px;width:1px;height:18px;background:#a0a0a0"></div><div class="a" style="left:1260px;top:109px;width:1px;height:18px;background:#000"></div><span class="t" style="left:1132.5px;top:112px;width:143px;text-align:center;font-size:12px;color:#000;transform:scaleX(0.87);transform-origin:50% 0;">QuickGraph</span><div class="a" style="left:907px;top:129px;width:54px;height:19px;border-top:1px solid #fff;border-left:1px solid #fff;border-top-left-radius:2px"></div><div class="a" style="left:959px;top:130px;width:1px;height:18px;background:#a0a0a0"></div><div class="a" style="left:960px;top:130px;width:1px;height:18px;background:#000"></div><span class="t" style="left:892.5px;top:133px;width:83px;text-align:center;font-size:12px;color:#000;transform:scaleX(0.87);transform-origin:50% 0;">Markers</span><div class="a" style="left:961px;top:129px;width:50px;height:19px;border-top:1px solid #fff;border-left:1px solid #fff;border-top-left-radius:2px"></div><div class="a" style="left:1009px;top:130px;width:1px;height:18px;background:#a0a0a0"></div><div class="a" style="left:1010px;top:130px;width:1px;height:18px;background:#000"></div><span class="t" style="left:946.5px;top:133px;width:79px;text-align:center;font-size:12px;color:#000;transform:scaleX(0.87);transform-origin:50% 0;">Trends</span><div class="a" style="left:1011px;top:129px;width:54px;height:19px;border-top:1px solid #fff;border-left:1px solid #fff;border-top-left-radius:2px"></div><div class="a" style="left:1063px;top:130px;width:1px;height:18px;background:#a0a0a0"></div><div class="a" style="left:1064px;top:130px;width:1px;height:18px;background:#000"></div><span class="t" style="left:996.5px;top:133px;width:83px;text-align:center;font-size:12px;color:#000;transform:scaleX(0.87);transform-origin:50% 0;">Overlay</span><div class="a" style="left:1065px;top:129px;width:61px;height:19px;border-top:1px solid #fff;border-left:1px solid #fff;border-top-left-radius:2px"></div><div class="a" style="left:1124px;top:130px;width:1px;height:18px;background:#a0a0a0"></div><div class="a" style="left:1125px;top:130px;width:1px;height:18px;background:#000"></div><span class="t" style="left:1050.5px;top:133px;width:90px;text-align:center;font-size:12px;color:#000;transform:scaleX(0.87);transform-origin:50% 0;">Error Bar</span><div class="a" style="left:1126px;top:129px;width:79px;height:19px;border-top:1px solid #fff;border-left:1px solid #fff;border-top-left-radius:2px"></div><div class="a" style="left:1203px;top:130px;width:1px;height:18px;background:#a0a0a0"></div><div class="a" style="left:1204px;top:130px;width:1px;height:18px;background:#000"></div><span class="t" style="left:1111.5px;top:133px;width:108px;text-align:center;font-size:12px;color:#000;transform:scaleX(0.87);transform-origin:50% 0;">Background</span><div class="a" style="left:1205px;top:129px;width:53px;height:19px;border-top:1px solid #fff;border-left:1px solid #fff;border-top-left-radius:2px"></div><div class="a" style="left:1256px;top:130px;width:1px;height:18px;background:#a0a0a0"></div><div class="a" style="left:1257px;top:130px;width:1px;height:18px;background:#000"></div><span class="t" style="left:1190.5px;top:133px;width:82px;text-align:center;font-size:12px;color:#000;transform:scaleX(0.87);transform-origin:50% 0;">Legend</span><div class="a" style="left:976px;top:150px;width:67px;height:18px;border-top:1px solid #fff;border-left:1px solid #fff;border-top-left-radius:2px"></div><div class="a" style="left:1041px;top:151px;width:1px;height:17px;background:#a0a0a0"></div><div class="a" style="left:1042px;top:151px;width:1px;height:17px;background:#000"></div><span class="t" style="left:961.5px;top:154px;width:96px;text-align:center;font-size:12px;color:#000;transform:scaleX(0.87);transform-origin:50% 0;">3D Gallery</span><div class="a" style="left:1043px;top:150px;width:37px;height:18px;border-top:1px solid #fff;border-left:1px solid #fff;border-top-left-radius:2px"></div><div class="a" style="left:1078px;top:151px;width:1px;height:17px;background:#a0a0a0"></div><div class="a" style="left:1079px;top:151px;width:1px;height:17px;background:#000"></div><span class="t" style="left:1028.5px;top:154px;width:66px;text-align:center;font-size:12px;color:#000;transform:scaleX(0.87);transform-origin:50% 0;">Style</span><div class="a" style="left:1080px;top:150px;width:38px;height:18px;border-top:1px solid #fff;border-left:1px solid #fff;border-top-left-radius:2px"></div><div class="a" style="left:1116px;top:151px;width:1px;height:17px;background:#a0a0a0"></div><div class="a" style="left:1117px;top:151px;width:1px;height:17px;background:#000"></div><span class="t" style="left:1065.5px;top:154px;width:67px;text-align:center;font-size:12px;color:#000;transform:scaleX(0.87);transform-origin:50% 0;">Data</span><div class="a" style="left:1118px;top:150px;width:41px;height:18px;border-top:1px solid #fff;border-left:1px solid #fff;border-top-left-radius:2px"></div><div class="a" style="left:1157px;top:151px;width:1px;height:17px;background:#a0a0a0"></div><div class="a" style="left:1158px;top:151px;width:1px;height:17px;background:#000"></div><span class="t" style="left:1103.5px;top:154px;width:70px;text-align:center;font-size:12px;color:#000;transform:scaleX(0.87);transform-origin:50% 0;">Titles</span><div class="a" style="left:1159px;top:150px;width:33px;height:18px;border-top:1px solid #fff;border-left:1px solid #fff;border-top-left-radius:2px"></div><div class="a" style="left:1190px;top:151px;width:1px;height:17px;background:#a0a0a0"></div><div class="a" style="left:1191px;top:151px;width:1px;height:17px;background:#000"></div><span class="t" style="left:1144.5px;top:154px;width:62px;text-align:center;font-size:12px;color:#000;transform:scaleX(0.87);transform-origin:50% 0;">Axis</span><div class="a" style="left:1192px;top:150px;width:25px;height:18px;border-top:1px solid #fff;border-left:1px solid #fff;border-top-left-radius:2px"></div><div class="a" style="left:1215px;top:151px;width:1px;height:17px;background:#a0a0a0"></div><div class="a" style="left:1216px;top:151px;width:1px;height:17px;background:#000"></div><span class="t" style="left:1177.5px;top:154px;width:54px;text-align:center;font-size:12px;color:#000;transform:scaleX(0.87);transform-origin:50% 0;">3D</span><div class="a" style="left:1217px;top:150px;width:42px;height:18px;border-top:1px solid #fff;border-left:1px solid #fff;border-top-left-radius:2px"></div><div class="a" style="left:1257px;top:151px;width:1px;height:17px;background:#a0a0a0"></div><div class="a" style="left:1258px;top:151px;width:1px;height:17px;background:#000"></div><span class="t" style="left:1202.5px;top:154px;width:71px;text-align:center;font-size:12px;color:#000;transform:scaleX(0.87);transform-origin:50% 0;">Fonts</span><div class="a" style="left:904px;top:168px;width:359px;height:316px;border-top:1px solid #fff;border-left:1px solid #fff"></div><div class="a" style="left:1261px;top:169px;width:1px;height:314px;background:#a0a0a0;"></div><div class="a" style="left:1262px;top:168px;width:1px;height:316px;background:#000;"></div><div class="a" style="left:905px;top:482px;width:357px;height:1px;background:#a0a0a0;"></div><div class="a" style="left:904px;top:483px;width:359px;height:1px;background:#000;"></div><div class="a" style="left:904px;top:148px;width:72px;height:22px;background:#f0f0f0;border-top:1px solid #fff;border-left:1px solid #fff;border-top-left-radius:2px"></div><div class="a" style="left:974px;top:149px;width:1px;height:20px;background:#a0a0a0;"></div><div class="a" style="left:975px;top:149px;width:1px;height:20px;background:#000;"></div><span class="t" style="left:895.0px;top:154px;width:90px;text-align:center;font-size:12px;color:#000;transform:scaleX(0.985);transform-origin:50% 0;font-weight:bold;">2D Gallery</span><div class="a" style="left:920px;top:187px;width:70px;height:70px;border-top:2px solid #808080;border-left:2px solid #808080;border-right:1px solid #fff;border-bottom:1px solid #fff;background:#f9f9f9"></div><span class="t" style="left:904.0px;top:261px;width:100px;text-align:center;font-size:12px;color:#000;transform:scaleX(0.87);transform-origin:50% 0;">Pie</span><div class="a" style="left:1007px;top:187px;width:70px;height:70px;border-top:1px solid #fff;border-left:1px solid #fff;border-right:2px solid #808080;border-bottom:2px solid #808080"></div><span class="t" style="left:990.5px;top:261px;width:100px;text-align:center;font-size:12px;color:#000;transform:scaleX(0.87);transform-origin:50% 0;">Polar</span><div class="a" style="left:1094px;top:187px;width:70px;height:70px;border-top:1px solid #fff;border-left:1px solid #fff;border-right:2px solid #808080;border-bottom:2px solid #808080"></div><span class="t" style="left:1075.0px;top:261px;width:100px;text-align:center;font-size:12px;color:#000;transform:scaleX(0.87);transform-origin:50% 0;">Bubble</span><div class="a" style="left:1181px;top:187px;width:70px;height:70px;border-top:1px solid #fff;border-left:1px solid #fff;border-right:2px solid #808080;border-bottom:2px solid #808080"></div><span class="t" style="left:1161.5px;top:261px;width:100px;text-align:center;font-size:12px;color:#000;transform:scaleX(0.87);transform-origin:50% 0;">Scatter</span><div class="a" style="left:920px;top:285px;width:70px;height:70px;border-top:1px solid #fff;border-left:1px solid #fff;border-right:2px solid #808080;border-bottom:2px solid #808080"></div><span class="t" style="left:904.0px;top:359px;width:100px;text-align:center;font-size:12px;color:#000;transform:scaleX(0.87);transform-origin:50% 0;">Line</span><div class="a" style="left:1007px;top:285px;width:70px;height:70px;border-top:1px solid #fff;border-left:1px solid #fff;border-right:2px solid #808080;border-bottom:2px solid #808080"></div><span class="t" style="left:990.5px;top:359px;width:100px;text-align:center;font-size:12px;color:#000;transform:scaleX(0.87);transform-origin:50% 0;">Bar</span><div class="a" style="left:1094px;top:285px;width:70px;height:70px;border-top:1px solid #fff;border-left:1px solid #fff;border-right:2px solid #808080;border-bottom:2px solid #808080"></div><span class="t" style="left:1075.0px;top:359px;width:100px;text-align:center;font-size:12px;color:#000;transform:scaleX(0.87);transform-origin:50% 0;">Area</span><div class="a" style="left:1181px;top:285px;width:70px;height:70px;border-top:1px solid #fff;border-left:1px solid #fff;border-right:2px solid #808080;border-bottom:2px solid #808080"></div><span class="t" style="left:1161.5px;top:359px;width:100px;text-align:center;font-size:12px;color:#000;transform:scaleX(0.87);transform-origin:50% 0;">Gantt</span><div class="a" style="left:920px;top:382px;width:70px;height:70px;border-top:1px solid #fff;border-left:1px solid #fff;border-right:2px solid #808080;border-bottom:2px solid #808080"></div><span class="t" style="left:904.0px;top:456px;width:100px;text-align:center;font-size:12px;color:#000;transform:scaleX(0.87);transform-origin:50% 0;">High-Low</span><div class="a" style="left:1007px;top:382px;width:70px;height:70px;border-top:1px solid #fff;border-left:1px solid #fff;border-right:2px solid #808080;border-bottom:2px solid #808080"></div><span class="t" style="left:990.5px;top:456px;width:100px;text-align:center;font-size:12px;color:#000;transform:scaleX(0.87);transform-origin:50% 0;">Candlestick</span><div class="a" style="left:1094px;top:382px;width:70px;height:70px;border-top:1px solid #fff;border-left:1px solid #fff;border-right:2px solid #808080;border-bottom:2px solid #808080"></div><span class="t" style="left:1075.0px;top:456px;width:100px;text-align:center;font-size:12px;color:#000;transform:scaleX(0.87);transform-origin:50% 0;">Box-Whisker</span><div class="a" style="left:1181px;top:382px;width:70px;height:70px;border-top:1px solid #fff;border-left:1px solid #fff;border-right:2px solid #808080;border-bottom:2px solid #808080"></div><span class="t" style="left:1161.5px;top:456px;width:100px;text-align:center;font-size:12px;color:#000;transform:scaleX(0.87);transform-origin:50% 0;">Time Series</span><svg style="left:0;top:0" width="1366" height="728"><path d="M955.5 223.5L955.5 196.5A27 27 0 0 1 981.1 232.1Z" fill="#ff0000"/><path d="M955.5 223.5L981.1 232.1A27 27 0 0 1 966.7 248.1Z" fill="#00ffff"/><path d="M955.5 223.5L966.7 248.1A27 27 0 0 1 931.6 236.0Z" fill="#00ff00"/><path d="M955.5 223.5L931.6 236.0A27 27 0 0 1 931.9 210.5Z" fill="#0000ff"/><path d="M955.5 223.5L931.9 210.5A27 27 0 0 1 955.5 196.5Z" fill="#a0a0a0"/><circle cx="1040.7" cy="222" r="25" fill="none" stroke="#000" stroke-width="1.3"/><path d="M1041.5 196v53M1014 222.5h53" stroke="#000" stroke-width="1.3"/><polyline points="1037.6,202.7 1033.4,199.0 1039.2,216.7 1040.9,222.5" fill="none" stroke="#00ff00" stroke-width="1.1"/><polyline points="1040.9,204.4 1045.4,208.5 1058.6,209.3 1049.9,222.5" fill="none" stroke="#00ff00" stroke-width="1.1"/><polyline points="1040.0,222.5 1026.4,222.5 1028.1,232.4 1035.5,239.4 1040.9,225.0 1044.2,224.6" fill="none" stroke="#00ff00" stroke-width="1.1"/><polyline points="1063.5,222.5 1052.4,217.6 1047.9,216.3 1038.0,216.7 1034.3,218.4 1026.4,232.8 1041.7,226.6 1060.6,236.5" fill="none" stroke="#ff00ff" stroke-width="1.1"/><path d="M1099.5 192v59.5h59" fill="none" stroke="#000"/><path d="M1099 192.5h3" stroke="#000"/><path d="M1099 207.5h3" stroke="#000"/><path d="M1099 221.5h3" stroke="#000"/><path d="M1099 236.5h3" stroke="#000"/><path d="M1111.5 251v-3" stroke="#000"/><path d="M1123.5 251v-3" stroke="#000"/><path d="M1134.5 251v-3" stroke="#000"/><path d="M1146.5 251v-3" stroke="#000"/><path d="M1158.5 251v-3" stroke="#000"/><circle cx="1145" cy="198" r="4" fill="#0000ff"/><circle cx="1131" cy="217" r="10" fill="#ff0000"/><path d="M1160 206.9A11.5 11.5 0 1 0 1160 225.7Z" fill="#00ff00"/><circle cx="1122.5" cy="233.5" r="9.5" fill="#00ffff"/><circle cx="1143.5" cy="245.5" r="2.5" fill="#ff00ff"/><path d="M1186.5 192v59.5h58" fill="none" stroke="#000"/><path d="M1186 192.5h3" stroke="#000"/><path d="M1186 207.5h3" stroke="#000"/><path d="M1186 221.5h3" stroke="#000"/><path d="M1186 236.5h3" stroke="#000"/><path d="M1201.5 251v-3" stroke="#000"/><path d="M1215.5 251v-3" stroke="#000"/><path d="M1230.5 251v-3" stroke="#000"/><path d="M1244.5 251v-3" stroke="#000"/><path d="M1227 197.5h5M1229.5 195v5" stroke="#0000ff"/><path d="M1230 198.5h5M1232.5 196v5" stroke="#0000ff"/><path d="M1241 199.5h5M1243.5 197v5" stroke="#0000ff"/><path d="M1227 207.5h5M1229.5 205v5" stroke="#0000ff"/><path d="M1215 214.5h5M1217.5 212v5" stroke="#0000ff"/><path d="M1218 215.5h5M1220.5 213v5" stroke="#0000ff"/><path d="M1221 215.5h5M1223.5 213v5" stroke="#0000ff"/><path d="M1235 214.5h5M1237.5 212v5" stroke="#0000ff"/><path d="M1240 216.5h5M1242.5 214v5" stroke="#0000ff"/><path d="M1217 219.5h5M1219.5 217v5" stroke="#0000ff"/><path d="M1216 221.5h5M1218.5 219v5" stroke="#0000ff"/><path d="M1204 227.5h5M1206.5 225v5" stroke="#ff0000"/><path d="M1205 224.5h5M1207.5 222v5" stroke="#ff0000"/><path d="M1207 222.5h5M1209.5 220v5" stroke="#ff0000"/><path d="M1209 222.5h5M1211.5 220v5" stroke="#ff0000"/><path d="M1211 223.5h5M1213.5 221v5" stroke="#ff0000"/><path d="M1212 222.5h5M1214.5 220v5" stroke="#ff0000"/><path d="M1206 229.5h5M1208.5 227v5" stroke="#ff0000"/><path d="M1208 227.5h5M1210.5 225v5" stroke="#ff0000"/><path d="M1207 236.5h5M1209.5 234v5" stroke="#ff0000"/><path d="M1213 236.5h5M1215.5 234v5" stroke="#ff0000"/><path d="M925.5 290v59.5h59" fill="none" stroke="#000"/><path d="M925 290.5h3" stroke="#000"/><path d="M925 302.5h3" stroke="#000"/><path d="M925 313.5h3" stroke="#000"/><path d="M925 325.5h3" stroke="#000"/><path d="M925 337.5h3" stroke="#000"/><path d="M932.5 349v-3" stroke="#000"/><path d="M938.5 349v-3" stroke="#000"/><path d="M945.5 349v-3" stroke="#000"/><path d="M951.5 349v-3" stroke="#000"/><path d="M958.5 349v-3" stroke="#000"/><path d="M964.5 349v-3" stroke="#000"/><path d="M971.5 349v-3" stroke="#000"/><path d="M977.5 349v-3" stroke="#000"/><path d="M984.5 349v-3" stroke="#000"/><polyline points="925.6,334.8 932.4,304.9 938.6,329.2 945.5,290.6 951.1,318.6 958,329.2 964.5,296.2 971,303.6 977.9,328.5 983.5,327.3" fill="none" stroke="#00ffff"/><polyline points="925.6,344.7 932.4,300.5 938.6,323.6 945.5,308.6 951.1,300.5 958,340.4 964.5,319.8 971,310.5 977.9,292.4 983.5,330.4" fill="none" stroke="#800080"/><path d="M1012.5 290v59.5h59" fill="none" stroke="#000"/><path d="M1012 290.5h3" stroke="#000"/><path d="M1012 302.5h3" stroke="#000"/><path d="M1012 313.5h3" stroke="#000"/><path d="M1012 325.5h3" stroke="#000"/><path d="M1012 337.5h3" stroke="#000"/><path d="M1025.5 349v-3" stroke="#000"/><path d="M1047.5 349v-3" stroke="#000"/><rect x="1013" y="327" width="5" height="22" fill="#800000"/><rect x="1018" y="325" width="5" height="24" fill="#00ff00"/><rect x="1025" y="299" width="5" height="50" fill="#800000"/><rect x="1030" y="325" width="5" height="24" fill="#00ff00"/><rect x="1036" y="306" width="5" height="43" fill="#800000"/><rect x="1041" y="310" width="5" height="39" fill="#00ff00"/><rect x="1048" y="325" width="5" height="24" fill="#800000"/><rect x="1053" y="293" width="5" height="56" fill="#00ff00"/><rect x="1059" y="311" width="5" height="38" fill="#800000"/><rect x="1064" y="318" width="6" height="31" fill="#00ff00"/><path d="M1099.5 290v59.5h0" fill="none" stroke="#000"/><path d="M1099 290.5h3" stroke="#000"/><path d="M1099 309.5h3" stroke="#000"/><path d="M1099 329.5h3" stroke="#000"/><path d="M1099 317L1114.5 333L1128 311L1144 325L1158 305V350H1099Z" fill="#ff0000"/><path d="M1099 323L1114.5 345L1128 334L1144 337L1158 318V350H1099Z" fill="#800080"/><path d="M1186.5 290v59.5h58" fill="none" stroke="#000"/><path d="M1186 290.5h3" stroke="#000"/><path d="M1186 301.5h3" stroke="#000"/><path d="M1186 309.5h3" stroke="#000"/><path d="M1186 319.5h3" stroke="#000"/><path d="M1186 329.5h3" stroke="#000"/><path d="M1186 339.5h3" stroke="#000"/><path d="M1196.5 349v-3" stroke="#000"/><path d="M1206.5 349v-3" stroke="#000"/><path d="M1215.5 349v-3" stroke="#000"/><path d="M1244.5 349v-3" stroke="#000"/><rect x="1189" y="295" width="7" height="5" fill="#a0a0a0"/><rect x="1196" y="295" width="15" height="5" fill="#0000ff"/><rect x="1200" y="305" width="7" height="5" fill="#a0a0a0"/><rect x="1207" y="305" width="15" height="5" fill="#0000ff"/><rect x="1202" y="314" width="6" height="5" fill="#a0a0a0"/><rect x="1208" y="314" width="13" height="5" fill="#0000ff"/><rect x="1208" y="324" width="13" height="5" fill="#a0a0a0"/><rect x="1221" y="324" width="2" height="5" fill="#0000ff"/><rect x="1213" y="334" width="10" height="5" fill="#a0a0a0"/><rect x="1223" y="334" width="15" height="5" fill="#0000ff"/><rect x="1219" y="344" width="11" height="5" fill="#a0a0a0"/><rect x="1230" y="344" width="12" height="5" fill="#0000ff"/><path d="M925.5 387v59.5h59" fill="none" stroke="#000"/><path d="M925 387.5h3" stroke="#000"/><path d="M925 402.5h3" stroke="#000"/><path d="M925 415.5h3" stroke="#000"/><path d="M925 431.5h3" stroke="#000"/><path d="M932.5 446v-3" stroke="#000"/><path d="M938.5 446v-3" stroke="#000"/><path d="M945.5 446v-3" stroke="#000"/><path d="M951.5 446v-3" stroke="#000"/><path d="M958.5 446v-3" stroke="#000"/><path d="M964.5 446v-3" stroke="#000"/><path d="M971.5 446v-3" stroke="#000"/><path d="M977.5 446v-3" stroke="#000"/><path d="M984.5 446v-3" stroke="#000"/><path d="M925.6 408v7" stroke="#800000" stroke-width="1.6"/><path d="M925.6 413.5h-2" stroke="#800000" stroke-width="1.2"/><path d="M932.4 400v10" stroke="#800000" stroke-width="1.6"/><path d="M932.4 404.5h-2" stroke="#800000" stroke-width="1.2"/><path d="M938.3 409v20" stroke="#800000" stroke-width="1.6"/><path d="M938.3 415.5h-2" stroke="#800000" stroke-width="1.2"/><path d="M945.5 404v13" stroke="#800000" stroke-width="1.6"/><path d="M945.5 405.5h-2" stroke="#800000" stroke-width="1.2"/><path d="M951.3 399v10" stroke="#800000" stroke-width="1.6"/><path d="M951.3 405.5h2" stroke="#800000" stroke-width="1.2"/><path d="M958.3 395v18" stroke="#800000" stroke-width="1.6"/><path d="M958.3 402.5h-2" stroke="#800000" stroke-width="1.2"/><path d="M964.8 412v3" stroke="#800000" stroke-width="1.6"/><path d="M964.8 413.5h-2" stroke="#800000" stroke-width="1.2"/><path d="M970.4 400v12" stroke="#800000" stroke-width="1.6"/><path d="M970.4 401.5h-2" stroke="#800000" stroke-width="1.2"/><path d="M977.2 406v20" stroke="#800000" stroke-width="1.6"/><path d="M977.2 415.5h-2" stroke="#800000" stroke-width="1.2"/><path d="M983.5 408v9" stroke="#800000" stroke-width="1.6"/><path d="M983.5 414.5h-2" stroke="#800000" stroke-width="1.2"/><path d="M1012.5 387v59.5h59" fill="none" stroke="#000"/><path d="M1012 387.5h3" stroke="#000"/><path d="M1012 402.5h3" stroke="#000"/><path d="M1012 415.5h3" stroke="#000"/><path d="M1012 431.5h3" stroke="#000"/><path d="M1021.5 446v-3" stroke="#000"/><path d="M1029.5 446v-3" stroke="#000"/><path d="M1037.5 446v-3" stroke="#000"/><path d="M1045.5 446v-3" stroke="#000"/><path d="M1053.5 446v-3" stroke="#000"/><path d="M1061.5 446v-3" stroke="#000"/><path d="M1069.5 446v-3" stroke="#000"/><path d="M1012.5 407v17" stroke="#800000" stroke-width="1.4"/><rect x="1010.0" y="409" width="5" height="5" fill="#f0f0f0" stroke="#800000" stroke-width="1.2"/><path d="M1021.5 407v15" stroke="#800000" stroke-width="1.4"/><path d="M1018.5 413.5h6" stroke="#800000" stroke-width="1.2"/><path d="M1029 405v15" stroke="#800000" stroke-width="1.4"/><rect x="1026" y="413" width="6" height="4" fill="#800000"/><path d="M1037.5 395v16" stroke="#800000" stroke-width="1.4"/><rect x="1035.0" y="397" width="5" height="4" fill="#f0f0f0" stroke="#800000" stroke-width="1.2"/><path d="M1045.5 406v16" stroke="#800000" stroke-width="1.4"/><rect x="1043.0" y="408" width="5" height="4" fill="#f0f0f0" stroke="#800000" stroke-width="1.2"/><path d="M1053.5 405v15" stroke="#800000" stroke-width="1.4"/><rect x="1050.5" y="410" width="6" height="4" fill="#800000"/><path d="M1062.5 406v15" stroke="#800000" stroke-width="1.4"/><path d="M1059.5 413.5h6" stroke="#800000" stroke-width="1.2"/><path d="M1070.5 396v16" stroke="#800000" stroke-width="1.4"/><rect x="1068.0" y="400" width="5" height="3" fill="#f0f0f0" stroke="#800000" stroke-width="1.2"/><path d="M1099.5 387v59.5h59" fill="none" stroke="#000"/><path d="M1099 387.5h3" stroke="#000"/><path d="M1099 399.5h3" stroke="#000"/><path d="M1099 410.5h3" stroke="#000"/><path d="M1099 422.5h3" stroke="#000"/><path d="M1099 434.5h3" stroke="#000"/><path d="M1111.5 446v-3" stroke="#000"/><path d="M1123.5 446v-3" stroke="#000"/><path d="M1134.5 446v-3" stroke="#000"/><path d="M1146.5 446v-3" stroke="#000"/><path d="M1158.5 446v-3" stroke="#000"/><path d="M1105.5 409v29" stroke="#000"/><path d="M1102.5 412.5h6v11l-1.5 3.5 1.5 3.5v5h-6v-5l1.5-3.5-1.5-3.5z" fill="#00ff00" stroke="#000"/><path d="M1104 427.5h3" stroke="#000"/><path d="M1117.5 410v23" stroke="#000"/><path d="M1114.5 413.5h6v6l-1.5 3.5 1.5 3.5v6h-6v-6l1.5-3.5-1.5-3.5z" fill="#00ff00" stroke="#000"/><path d="M1116 423.5h3" stroke="#000"/><path d="M1128.5 401v33" stroke="#000"/><path d="M1125.5 405.5h6v16l-1.5 3.5 1.5 3.5v5h-6v-5l1.5-3.5-1.5-3.5z" fill="#00ff00" stroke="#000"/><path d="M1127 425.5h3" stroke="#000"/><path d="M1140.5 399v31" stroke="#000"/><path d="M1137.5 401.5h6v17l-1.5 3.5 1.5 3.5v4h-6v-4l1.5-3.5-1.5-3.5z" fill="#00ff00" stroke="#000"/><path d="M1139 422.5h3" stroke="#000"/><path d="M1151.5 397v30" stroke="#000"/><path d="M1148.5 398.5h6v13l-1.5 3.5 1.5 3.5v8h-6v-8l1.5-3.5-1.5-3.5z" fill="#00ff00" stroke="#000"/><path d="M1150 415.5h3" stroke="#000"/><path d="M1186.5 387v59.5h58" fill="none" stroke="#000"/><path d="M1186 387.5h3M1186 404.5h3M1186 426.5h3" stroke="#000"/><path d="M1189.5 446v-2M1192.5 446v-2M1195.5 446v-2M1198.5 446v-2M1201.5 446v-2M1204.5 446v-2M1207.5 446v-2M1210.5 446v-2M1213.5 446v-2M1216.5 446v-2M1219.5 446v-2M1222.5 446v-2M1225.5 446v-2M1228.5 446v-2M1231.5 446v-2M1234.5 446v-2M1237.5 446v-2M1240.5 446v-2M1243.5 446v-2" stroke="#000"/><path d="M1186.7 401.8l2.3 2.3-2.3 2.3-2.3-2.3z" fill="#0000e0" stroke="#000060" stroke-width="0.5"/><path d="M1190.1 411.5l2.3 2.3-2.3 2.3-2.3-2.3z" fill="#0000e0" stroke="#000060" stroke-width="0.5"/><path d="M1193.3 419.3l2.3 2.3-2.3 2.3-2.3-2.3z" fill="#0000e0" stroke="#000060" stroke-width="0.5"/><path d="M1196.3 423.6l2.3 2.3-2.3 2.3-2.3-2.3z" fill="#0000e0" stroke="#000060" stroke-width="0.5"/><path d="M1199.1 423.6l2.3 2.3-2.3 2.3-2.3-2.3z" fill="#0000e0" stroke="#000060" stroke-width="0.5"/><path d="M1202.3 418.6l2.3 2.3-2.3 2.3-2.3-2.3z" fill="#0000e0" stroke="#000060" stroke-width="0.5"/><path d="M1205.4 409.6l2.3 2.3-2.3 2.3-2.3-2.3z" fill="#0000e0" stroke="#000060" stroke-width="0.5"/><path d="M1208.2 400.3l2.3 2.3-2.3 2.3-2.3-2.3z" fill="#0000e0" stroke="#000060" stroke-width="0.5"/><path d="M1211.2 391.6l2.3 2.3-2.3 2.3-2.3-2.3z" fill="#0000e0" stroke="#000060" stroke-width="0.5"/><path d="M1214.5 386.3l2.3 2.3-2.3 2.3-2.3-2.3z" fill="#0000e0" stroke="#000060" stroke-width="0.5"/><path d="M1217.2 385.0l2.3 2.3-2.3 2.3-2.3-2.3z" fill="#0000e0" stroke="#000060" stroke-width="0.5"/><path d="M1220.3 389.1l2.3 2.3-2.3 2.3-2.3-2.3z" fill="#0000e0" stroke="#000060" stroke-width="0.5"/><path d="M1223.2 396.2l2.3 2.3-2.3 2.3-2.3-2.3z" fill="#0000e0" stroke="#000060" stroke-width="0.5"/><path d="M1226.5 405.6l2.3 2.3-2.3 2.3-2.3-2.3z" fill="#0000e0" stroke="#000060" stroke-width="0.5"/><path d="M1229.4 415.3l2.3 2.3-2.3 2.3-2.3-2.3z" fill="#0000e0" stroke="#000060" stroke-width="0.5"/><path d="M1232.4 421.5l2.3 2.3-2.3 2.3-2.3-2.3z" fill="#0000e0" stroke="#000060" stroke-width="0.5"/><path d="M1235.6 424.2l2.3 2.3-2.3 2.3-2.3-2.3z" fill="#0000e0" stroke="#000060" stroke-width="0.5"/><path d="M1238.6 421.5l2.3 2.3-2.3 2.3-2.3-2.3z" fill="#0000e0" stroke="#000060" stroke-width="0.5"/><path d="M1241.5 415.3l2.3 2.3-2.3 2.3-2.3-2.3z" fill="#0000e0" stroke="#000060" stroke-width="0.5"/><path d="M1244.6 405.6l2.3 2.3-2.3 2.3-2.3-2.3z" fill="#0000e0" stroke="#000060" stroke-width="0.5"/><path d="M1196 436.5l12.7-4.5v2h28.2v5h-28.2v2.8z" fill="#ff0000"/></svg><div class="a" style="left:904px;top:493px;width:72px;height:23px;border-top:1px solid #fff;border-left:1px solid #fff;border-right:2px solid #808080;border-bottom:2px solid #808080"></div><div class="a" style="left:982px;top:493px;width:72px;height:23px;border-top:1px solid #fff;border-left:1px solid #fff;border-right:2px solid #808080;border-bottom:2px solid #808080"></div><div class="a" style="left:1060px;top:493px;width:72px;height:23px;border-top:1px solid #fff;border-left:1px solid #fff;border-right:2px solid #808080;border-bottom:2px solid #808080"></div><div class="a" style="left:1138px;top:493px;width:72px;height:23px;border-top:1px solid #fff;border-left:1px solid #fff;border-right:2px solid #808080;border-bottom:2px solid #808080"></div><div class="a" style="left:1060px;top:493px;width:72px;height:23px;border:1px solid #5a5a5a;background:#f0f0f0"></div><div class="a" style="left:1061px;top:494px;width:70px;height:21px;border-top:1px solid #fff;border-left:1px solid #fff;border-right:2px solid #8a8a8a;border-bottom:2px solid #8a8a8a"></div><div class="a" style="left:1064px;top:497px;width:64px;height:15px;border:1px dotted #000;"></div><span class="t" style="left:904.0px;top:498px;width:72px;text-align:center;font-size:12px;color:#000;transform:scaleX(0.87);transform-origin:50% 0;">OK</span><span class="t" style="left:982.0px;top:498px;width:72px;text-align:center;font-size:12px;color:#000;transform:scaleX(0.87);transform-origin:50% 0;">Close</span><span class="t" style="left:1060.0px;top:498px;width:72px;text-align:center;font-size:12px;color:#000;transform:scaleX(0.87);transform-origin:50% 0;"><u>A</u>pply Now</span><span class="t" style="left:1138.0px;top:498px;width:72px;text-align:center;font-size:12px;color:#000;transform:scaleX(0.87);transform-origin:50% 0;"><u>H</u>elp</span></body></html>
